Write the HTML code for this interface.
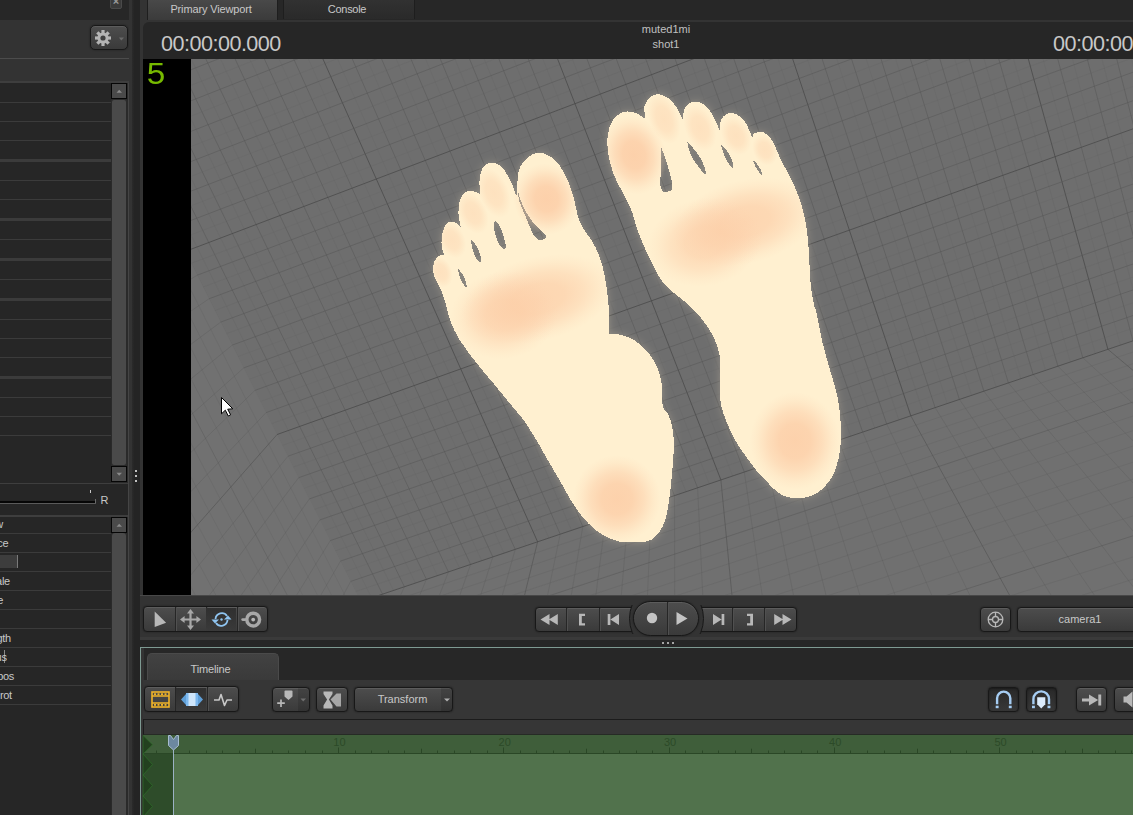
<!DOCTYPE html>
<html><head><meta charset="utf-8"><title>SFM</title>
<style>
*{box-sizing:border-box;margin:0;padding:0}
html,body{width:1133px;height:815px;overflow:hidden;background:#262626}
body{font-family:"Liberation Sans",sans-serif;font-size:11px;color:#c8c8c8;position:relative}
#root{position:absolute;left:0;top:0;width:1133px;height:815px;overflow:hidden;background:#262626}
.a{position:absolute}
.btn{position:absolute;border:1px solid #181818;border-radius:4px;background:linear-gradient(#4d4d4d,#3a3a3a);box-shadow:inset 0 1px 0 #5c5c5c,0 0 1.5px #151515}
.grp{position:absolute;border:1px solid #181818;border-radius:4px;background:linear-gradient(#4d4d4d,#3a3a3a);box-shadow:inset 0 1px 0 #5c5c5c,0 0 1.5px #151515;overflow:hidden}
.dv{position:absolute;top:0;bottom:0;width:2px;background:#262626;border-right:1px solid #505050}
.row{position:absolute;left:0;width:111px;background:#3b3b3b;height:1px}
.lbl{position:absolute;left:0;color:#c8c8c8;font-size:11px;line-height:13px;white-space:nowrap;letter-spacing:-0.35px}
.tab{position:absolute;text-align:center;color:#c8c8c8;font-size:11px;letter-spacing:-0.15px}
svg{display:block}
</style></head><body><div id="root">

<!-- ===== LEFT PANEL ===== -->
<div class="a" style="left:0;top:0;width:129px;height:20px;background:#272727"></div>
<div class="a" style="left:0;top:20px;width:129px;height:38px;background:#333"></div>
<div class="a" style="left:110px;top:-4px;width:12px;height:13px;background:#3a3a3a;border:1px solid #4a4a4a;border-radius:2px"></div>
<div class="a" style="left:110px;top:-5px;width:12px;height:13px;color:#9a9a9a;font-size:11px;font-weight:bold;text-align:center;line-height:13px">×</div>
<div class="btn" style="left:89.5px;top:25px;width:38px;height:25px;border-radius:5px"></div>
<svg class="a" style="left:94px;top:29px" width="30" height="18" viewBox="0 0 30 18">
 <g transform="translate(9,9)" fill="#b4b4b4">
  <g id="teeth"><rect x="-1.6" y="-8" width="3.2" height="16"/><rect x="-1.6" y="-8" width="3.2" height="16" transform="rotate(45)"/><rect x="-1.6" y="-8" width="3.2" height="16" transform="rotate(90)"/><rect x="-1.6" y="-8" width="3.2" height="16" transform="rotate(135)"/></g>
  <circle r="5.6"/><circle r="2.6" fill="#404040"/>
 </g>
 <path d="M24.8,8.6 L30,8.6 L27.4,11.4 Z" fill="#6a6a6a"/>
</svg>
<div class="a" style="left:0;top:58px;width:129px;height:1px;background:#4c4c4c"></div>
<div class="a" style="left:0;top:59px;width:129px;height:22px;background:#333"></div>
<div class="a" style="left:0;top:81px;width:129px;height:2px;background:#3e3e3e"></div>
<!-- upper list -->
<div class="a" style="left:0;top:83px;width:128px;height:400px;background:#2a2a2a"></div>
<div class="a" style="left:0;top:83px;width:111px;height:400px;background:#262626"></div>
<div class="row" style="top:102px;height:1px"></div><div class="row" style="top:121px;height:1px"></div><div class="row" style="top:140px;height:1px"></div><div class="row" style="top:159px;height:3px"></div><div class="row" style="top:180px;height:1px"></div><div class="row" style="top:199px;height:1px"></div><div class="row" style="top:218px;height:3px"></div><div class="row" style="top:239px;height:1px"></div><div class="row" style="top:258px;height:3px"></div><div class="row" style="top:279px;height:1px"></div><div class="row" style="top:298px;height:3px"></div><div class="row" style="top:319px;height:1px"></div><div class="row" style="top:338px;height:1px"></div><div class="row" style="top:357px;height:1px"></div><div class="row" style="top:376px;height:3px"></div><div class="row" style="top:397px;height:1px"></div><div class="row" style="top:416px;height:1px"></div><div class="row" style="top:435px;height:1px"></div>
<!-- scrollbar 1 -->
<div class="a" style="left:112px;top:100px;width:14px;height:365px;background:#4a4a4a;border-radius:2px"></div>
<div class="a" style="left:111px;top:83px;width:16px;height:16px;background:#4a4a4a;border:1px solid #060606"></div>
<svg class="a" style="left:111px;top:83px" width="16" height="16"><path d="M5.5,9.8 L8.2,6.8 L11,9.8 Z" fill="#8a8a8a"/></svg>
<div class="a" style="left:111px;top:466px;width:16px;height:16px;background:#4a4a4a;border:1px solid #060606"></div>
<svg class="a" style="left:111px;top:466px" width="16" height="16"><path d="M5.5,6.8 L8.2,9.8 L11,6.8 Z" fill="#8a8a8a"/></svg>
<!-- slider zone -->
<div class="a" style="left:0;top:483px;width:129px;height:1px;background:#3e3e3e"></div>
<div class="a" style="left:0;top:484px;width:129px;height:31px;background:#262626"></div>
<div class="a" style="left:0;top:500.5px;width:96px;height:3px;background:#060606;border-bottom:1px solid #5a5a5a"></div>
<div class="a" style="left:95px;top:499px;width:1px;height:4px;background:#6a6a6a"></div>
<div class="a" style="left:90px;top:490px;width:1px;height:3px;background:#c8c8c8"></div>
<div class="lbl" style="left:100.5px;top:493.5px;font-size:11px">R</div>
<div class="a" style="left:0;top:515px;width:129px;height:2px;background:#3e3e3e"></div>
<!-- lower list -->
<div class="a" style="left:0;top:517px;width:128px;height:298px;background:#2a2a2a"></div>
<div class="a" style="left:0;top:517px;width:111px;height:298px;background:#262626"></div>
<div class="row" style="top:533px"></div><div class="row" style="top:552px"></div><div class="row" style="top:571px"></div><div class="row" style="top:590px"></div><div class="row" style="top:609px"></div><div class="row" style="top:628px"></div><div class="row" style="top:647px"></div><div class="row" style="top:666px"></div><div class="row" style="top:685px"></div><div class="row" style="top:704px"></div>
<div class="a" style="left:112px;top:533px;width:14px;height:290px;background:#4a4a4a;border-radius:3px 3px 0 0"></div>
<div class="a" style="left:111px;top:517px;width:16px;height:16px;background:#4a4a4a;border:1px solid #060606"></div>
<svg class="a" style="left:111px;top:517px" width="16" height="16"><path d="M5.5,9.8 L8.2,6.8 L11,9.8 Z" fill="#8a8a8a"/></svg>
<div class="a" style="left:0;top:555px;width:18px;height:13px;background:#3d3d3d;border-right:1px solid #7a7a7a"></div>
<div class="a" style="left:4px;top:650px;width:1px;height:13px;background:#8a8a8a"></div>
<div class="lbl" style="top:517.5px;left:-4.7px">w</div>
<div class="lbl" style="top:536.5px;left:-2.7px">ce</div>
<div class="lbl" style="top:574.5px;left:-3.9px">ale</div>
<div class="lbl" style="top:593.5px;left:-2.7px">e</div>
<div class="lbl" style="top:631.5px;left:-3.5px">gth</div>
<div class="lbl" style="top:650.5px;left:-4.4px">us</div>
<div class="lbl" style="top:669.5px;left:-2.8px">pos</div>
<div class="lbl" style="top:688.5px;left:0px">rot</div>

<div class="a" style="left:128px;top:83px;width:1px;height:732px;background:#454545"></div>
<!-- ===== SPLITTER ===== -->
<div class="a" style="left:129px;top:0;width:3px;height:815px;background:#333"></div>
<div class="a" style="left:132px;top:0;width:8px;height:815px;background:linear-gradient(90deg,#2b2b2b,#242424 30%,#242424)"></div>
<div class="a" style="left:140px;top:0;width:3px;height:815px;background:#333"></div>
<div class="a" style="left:135px;top:470px;width:2px;height:2px;background:#c0c0c0"></div>
<div class="a" style="left:135px;top:475px;width:2px;height:2px;background:#c0c0c0"></div>
<div class="a" style="left:135px;top:480px;width:2px;height:2px;background:#c0c0c0"></div>

<!-- ===== TOP TABS ===== -->
<div class="a" style="left:143px;top:0;width:990px;height:20px;background:#272727"></div>
<div class="a" style="left:143px;top:0;width:4px;height:20px;background:#333"></div>
<div class="tab" style="left:147px;top:-3px;width:131px;height:23px;line-height:22px;background:linear-gradient(#4a4a4a,#3b3b3b);border:1px solid #1e1e1e;border-bottom:none;border-radius:3px 3px 0 0;padding-right:3px">Primary Viewport</div>
<div class="tab" style="left:283px;top:-3px;width:132px;height:22px;line-height:22px;background:linear-gradient(#323232,#2a2a2a);border:1px solid #1e1e1e;border-bottom:none;border-radius:3px 3px 0 0;padding-right:4px;letter-spacing:-0.3px">Console</div>
<div class="a" style="left:143px;top:20px;width:990px;height:2px;background:#333"></div>
<div class="a" style="left:143px;top:22px;width:10px;height:10px;background:#333"></div>
<div class="a" style="left:143px;top:22px;width:990px;height:37px;background:#262626;border-radius:6px 0 0 0"></div>
<div class="a" id="tc1" style="left:161px;top:32px;font-size:21.6px;line-height:24px;letter-spacing:-0.52px;color:#c8c8c8;white-space:nowrap">00:00:00.000</div>
<div class="a" id="tc2" style="left:1053px;top:32px;font-size:21.6px;line-height:24px;letter-spacing:-0.52px;color:#c8c8c8;white-space:nowrap">00:00:00.000</div>
<div class="a" style="left:566px;top:22px;width:200px;text-align:center;font-size:11px;line-height:15px;color:#c0c0c0">muted1mi<br>shot1</div>

<!-- ===== VIEWPORT ===== -->
<div class="a" style="left:143px;top:59px;width:48px;height:536px;background:#000"></div>
<div class="a" id="fps" style="left:146px;top:59px;font-family:'Liberation Mono','DejaVu Sans Mono',monospace;font-size:32px;line-height:34px;color:#76b900;transform-origin:0 0;transform:scaleX(1.04)">5</div>
<svg id="vp" width="1133" height="815" viewBox="0 0 1133 815" style="position:absolute;left:0;top:0">
<defs>
 <clipPath id="vpc"><rect x="191" y="59" width="942" height="536"/></clipPath>
 <clipPath id="cl"><path d="M450.7,321.6C448.1,314.8 446.4,305.2 444.5,299.5C442.7,293.8 441.3,290.9 439.6,287.2C438.0,283.6 435.8,280.9 434.7,277.4C433.6,273.9 432.7,269.7 433.0,266.4C433.3,263.1 435.0,259.8 436.7,257.8C438.4,255.8 442.0,254.9 443.3,254.6C444.6,254.3 444.5,255.8 444.5,255.8C444.5,255.8 441.9,249.5 441.6,245.5C441.3,241.6 441.7,235.7 442.6,232.0C443.5,228.3 445.2,225.2 447.0,223.4C448.8,221.7 451.1,221.4 453.1,221.7C455.2,222.0 458.0,224.5 459.3,225.4C460.5,226.3 460.7,226.9 460.7,226.9C460.7,226.9 458.7,218.1 458.5,213.6C458.4,209.2 458.6,203.7 459.8,200.1C460.9,196.6 463.2,193.8 465.4,192.3C467.6,190.8 470.5,190.8 472.8,191.0C475.0,191.2 477.7,192.9 478.9,193.5C480.1,194.1 479.9,194.5 479.9,194.5C479.9,194.5 479.2,183.6 479.6,179.3C480.1,174.9 481.1,170.9 482.6,168.2C484.1,165.6 486.3,164.0 488.7,163.3C491.2,162.6 494.6,162.6 497.3,163.8C500.0,165.0 502.2,167.3 504.7,170.7C507.1,174.1 510.1,180.1 512.0,184.2C513.9,188.3 515.3,194.2 516.2,195.2C517.1,196.2 517.4,190.3 517.4,190.3C517.4,190.3 517.2,177.8 518.2,173.1C519.1,168.4 520.6,165.2 523.1,162.1C525.5,158.9 529.4,155.7 532.9,154.2C536.4,152.8 540.2,152.5 543.9,153.5C547.6,154.5 551.7,157.1 555.0,160.1C558.2,163.2 561.0,167.5 563.6,171.9C566.1,176.3 568.3,181.7 570.2,186.6C572.0,191.5 573.3,196.4 574.6,201.3C575.9,206.3 576.4,211.6 577.8,216.1C579.2,220.6 580.9,224.3 583.2,228.3C585.5,232.4 589.1,236.1 591.8,240.6C594.4,245.1 597.1,250.0 599.1,255.3C601.2,260.7 602.7,266.4 604.0,272.5C605.4,278.7 606.4,285.6 607.2,292.1C608.1,298.7 608.6,304.8 609.0,311.8C609.3,318.7 609.4,333.9 609.4,333.9C609.4,333.9 609.0,334.1 609.0,334.1C609.0,334.1 615.9,333.6 620.2,334.7C624.5,335.8 630.3,337.7 634.9,340.6C639.6,343.6 644.5,348.0 648.2,352.4C651.9,356.8 654.8,362.2 657.0,367.1C659.2,372.0 660.6,376.9 661.4,381.8C662.3,386.7 661.8,392.4 662.0,396.6C662.3,400.7 661.8,403.7 662.9,406.9C664.0,410.0 667.2,412.0 668.8,415.7C670.4,419.4 671.8,423.8 672.6,428.9C673.5,434.1 673.8,440.2 673.8,446.6C673.8,453.0 673.2,459.9 672.6,467.2C672.0,474.6 671.2,483.4 670.3,490.8C669.4,498.1 668.6,505.5 667.3,511.4C666.1,517.3 664.9,521.9 662.9,526.1C660.9,530.3 658.2,533.9 655.6,536.4C652.9,539.0 650.7,540.5 646.7,541.4C642.8,542.4 636.4,542.1 631.8,542.1C627.2,542.1 623.5,542.3 619.4,541.5C615.3,540.7 611.2,539.2 607.1,537.2C603.0,535.2 598.8,532.6 594.7,529.2C590.6,525.8 586.5,521.8 582.4,516.8C578.3,511.7 573.7,504.9 570.0,498.9C566.3,492.9 563.7,487.2 560.0,480.8C556.3,474.4 551.9,467.3 548.0,460.5C544.1,453.7 539.3,445.0 536.4,440.0C533.5,435.0 532.7,434.0 530.4,430.4C528.1,426.8 526.0,423.2 522.5,418.6C519.0,414.0 514.2,408.7 509.5,403.0C504.8,397.3 500.0,391.3 494.4,384.5C488.8,377.7 481.6,369.6 475.8,362.2C470.0,354.8 464.0,346.8 459.8,340.0C455.6,333.2 453.2,328.3 450.7,321.6Z"/></clipPath>
 <clipPath id="cr"><path d="M663.6,283.2C656.7,274.9 653.1,265.0 648.9,256.7C644.7,248.3 641.5,241.0 638.6,233.1C635.6,225.3 633.9,216.4 631.2,209.6C628.5,202.7 625.3,197.8 622.4,191.9C619.4,186.0 615.9,180.6 613.6,174.2C611.2,167.8 609.2,160.0 608.3,153.6C607.3,147.2 607.0,141.3 607.7,135.9C608.3,130.5 609.6,125.1 612.1,121.2C614.5,117.3 618.7,113.9 622.4,112.4C626.1,110.9 630.5,111.4 634.2,112.4C637.8,113.4 642.6,117.4 644.5,118.3C646.3,119.1 645.4,117.4 645.4,117.4C645.4,117.4 643.6,109.9 644.5,106.5C645.3,103.1 647.9,99.1 650.4,97.1C652.8,95.0 656.0,93.8 659.2,94.1C662.4,94.5 666.6,96.8 669.5,99.1C672.4,101.4 674.7,104.5 676.9,108.0C679.1,111.4 681.7,117.9 682.7,119.7C683.8,121.6 683.3,118.9 683.3,118.9C683.3,118.9 683.1,112.1 684.2,109.4C685.3,106.8 687.7,104.2 690.1,103.0C692.6,101.7 696.0,101.2 698.9,102.1C701.9,102.9 705.1,105.0 707.8,108.0C710.5,110.9 713.2,116.1 715.1,119.7C717.1,123.4 718.7,128.5 719.6,130.1C720.4,131.6 720.1,129.2 720.1,129.2C720.1,129.2 719.9,122.3 721.0,119.7C722.2,117.2 724.5,114.8 726.9,113.9C729.4,112.9 732.8,112.6 735.7,113.9C738.7,115.1 742.1,118.0 744.6,121.2C747.0,124.4 749.2,130.3 750.5,133.0C751.7,135.7 751.5,137.1 751.9,137.7C752.3,138.3 752.8,136.5 752.8,136.5C752.8,136.5 753.1,133.7 754.9,133.0C756.7,132.3 761.0,131.4 763.7,132.4C766.4,133.4 768.9,135.8 771.1,138.9C773.3,141.9 775.3,147.0 777.0,150.7C778.7,154.3 779.2,156.6 781.4,161.0C783.6,165.4 787.3,171.0 790.2,177.2C793.2,183.3 796.6,190.9 799.1,197.8C801.5,204.6 803.5,211.5 804.9,218.4C806.4,225.3 807.1,231.6 807.9,239.0C808.6,246.4 808.9,254.7 809.4,262.6C809.8,270.4 810.1,279.2 810.8,286.1C811.6,293.0 812.8,299.2 813.8,303.8C814.7,308.3 815.2,307.0 816.7,313.6C818.1,320.1 820.3,333.7 822.6,343.0C824.8,352.3 827.5,360.7 829.9,369.5C832.4,378.3 835.6,388.1 837.3,396.0C839.0,403.8 839.6,409.7 840.2,416.6C840.9,423.5 841.3,430.3 841.1,437.2C840.9,444.1 840.1,451.5 838.7,457.8C837.4,464.2 835.6,470.3 832.9,475.5C830.2,480.6 826.2,485.3 822.6,488.7C818.9,492.2 814.7,494.5 810.8,496.1C806.8,497.7 802.9,498.0 799.0,498.2C795.1,498.3 790.9,498.1 787.2,497.0C783.5,495.9 780.3,494.3 776.9,491.7C773.5,489.1 770.0,484.9 766.6,481.4C763.2,477.8 759.7,474.4 756.3,470.3C752.9,466.2 749.4,461.4 746.0,456.6C742.6,451.7 738.9,446.9 735.7,441.2C732.5,435.5 729.3,428.6 726.9,422.5C724.4,416.4 722.1,410.7 721.0,404.8C719.8,398.9 720.2,393.1 720.1,387.2C720.0,381.3 720.5,374.9 720.4,369.5C720.3,364.1 720.6,360.2 719.5,354.8C718.4,349.4 716.3,342.8 713.6,337.1C710.9,331.5 707.2,326.1 703.3,320.9C699.4,315.8 696.7,312.5 690.1,306.2C683.4,299.9 670.5,291.4 663.6,283.2Z"/></clipPath>
 <filter id="glow" x="-20%" y="-20%" width="140%" height="140%"><feGaussianBlur stdDeviation="2.2"/></filter>
 <filter id="glow2" x="-20%" y="-20%" width="140%" height="140%"><feGaussianBlur stdDeviation="5"/></filter>
 <radialGradient id="bg"><stop offset="0" stop-color="#fccba4" stop-opacity="0.9"/><stop offset="0.35" stop-color="#fccba4" stop-opacity="0.82"/><stop offset="0.6" stop-color="#fccca6" stop-opacity="0.55"/><stop offset="0.82" stop-color="#fccda8" stop-opacity="0.2"/><stop offset="1" stop-color="#fdd3b0" stop-opacity="0"/></radialGradient><radialGradient id="bt"><stop offset="0" stop-color="#fcd0aa" stop-opacity="0.46"/><stop offset="0.5" stop-color="#fcd0aa" stop-opacity="0.38"/><stop offset="0.8" stop-color="#fcd0aa" stop-opacity="0.15"/><stop offset="1" stop-color="#fdd3b0" stop-opacity="0"/></radialGradient>
 <filter id="b6" x="-50%" y="-50%" width="200%" height="200%"><feGaussianBlur stdDeviation="7"/></filter>
</defs>
<g clip-path="url(#vpc)">
 <rect x="191" y="59" width="942" height="536" fill="#6e6e6e"/>
 <polygon points="-153.1,-423.7 1605.0,-1238.5 1745.6,134.1 360.8,601.5" fill="#6e6e6e"/><polygon points="-153.1,-423.7 360.8,601.5 34.1,1245.7 -1734.7,-1205.2" fill="#717171"/><polygon points="360.8,601.5 1745.6,134.1 3235.0,341.6 34.1,1245.7" fill="#707070"/><g fill="none"><line x1="-139.9" y1="-429.8" x2="371.6" y2="597.8" stroke="#606060" stroke-width="0.80" opacity="0.25"/><line x1="-126.5" y1="-436.0" x2="382.5" y2="594.1" stroke="#555555" stroke-width="0.95" opacity="0.52"/><line x1="-113.2" y1="-442.2" x2="393.5" y2="590.4" stroke="#606060" stroke-width="0.80" opacity="0.25"/><line x1="-99.8" y1="-448.4" x2="404.4" y2="586.7" stroke="#555555" stroke-width="0.95" opacity="0.52"/><line x1="-86.4" y1="-454.6" x2="415.4" y2="583.0" stroke="#606060" stroke-width="0.80" opacity="0.25"/><line x1="-73.0" y1="-460.8" x2="426.4" y2="579.3" stroke="#555555" stroke-width="0.95" opacity="0.52"/><line x1="-59.5" y1="-467.1" x2="437.4" y2="575.6" stroke="#606060" stroke-width="0.80" opacity="0.25"/><line x1="-45.9" y1="-473.4" x2="448.4" y2="571.9" stroke="#555555" stroke-width="0.95" opacity="0.52"/><line x1="-32.4" y1="-479.7" x2="459.5" y2="568.1" stroke="#606060" stroke-width="0.80" opacity="0.25"/><line x1="-18.8" y1="-486.0" x2="470.6" y2="564.4" stroke="#555555" stroke-width="0.95" opacity="0.52"/><line x1="-5.1" y1="-492.3" x2="481.7" y2="560.6" stroke="#606060" stroke-width="0.80" opacity="0.25"/><line x1="8.6" y1="-498.6" x2="492.8" y2="556.9" stroke="#555555" stroke-width="0.95" opacity="0.52"/><line x1="22.3" y1="-505.0" x2="504.0" y2="553.1" stroke="#606060" stroke-width="0.80" opacity="0.25"/><line x1="36.1" y1="-511.4" x2="515.2" y2="549.3" stroke="#555555" stroke-width="0.95" opacity="0.52"/><line x1="49.9" y1="-517.8" x2="526.4" y2="545.5" stroke="#606060" stroke-width="0.80" opacity="0.25"/><line x1="63.7" y1="-524.2" x2="537.6" y2="541.8" stroke="#464646" stroke-width="1.00" opacity="0.72"/><line x1="77.6" y1="-530.6" x2="548.9" y2="538.0" stroke="#606060" stroke-width="0.80" opacity="0.25"/><line x1="91.5" y1="-537.1" x2="560.2" y2="534.1" stroke="#555555" stroke-width="0.95" opacity="0.52"/><line x1="105.5" y1="-543.5" x2="571.5" y2="530.3" stroke="#606060" stroke-width="0.80" opacity="0.25"/><line x1="119.5" y1="-550.0" x2="582.8" y2="526.5" stroke="#555555" stroke-width="0.95" opacity="0.52"/><line x1="133.5" y1="-556.5" x2="594.2" y2="522.7" stroke="#606060" stroke-width="0.80" opacity="0.25"/><line x1="147.6" y1="-563.1" x2="605.6" y2="518.8" stroke="#555555" stroke-width="0.95" opacity="0.52"/><line x1="161.7" y1="-569.6" x2="617.0" y2="515.0" stroke="#606060" stroke-width="0.80" opacity="0.25"/><line x1="175.9" y1="-576.2" x2="628.5" y2="511.1" stroke="#555555" stroke-width="0.95" opacity="0.52"/><line x1="190.1" y1="-582.7" x2="639.9" y2="507.2" stroke="#606060" stroke-width="0.80" opacity="0.25"/><line x1="204.3" y1="-589.3" x2="651.4" y2="503.4" stroke="#555555" stroke-width="0.95" opacity="0.52"/><line x1="218.6" y1="-596.0" x2="662.9" y2="499.5" stroke="#606060" stroke-width="0.80" opacity="0.25"/><line x1="232.9" y1="-602.6" x2="674.5" y2="495.6" stroke="#555555" stroke-width="0.95" opacity="0.52"/><line x1="247.3" y1="-609.3" x2="686.0" y2="491.7" stroke="#606060" stroke-width="0.80" opacity="0.25"/><line x1="261.7" y1="-615.9" x2="697.6" y2="487.8" stroke="#555555" stroke-width="0.95" opacity="0.52"/><line x1="276.1" y1="-622.6" x2="709.2" y2="483.8" stroke="#606060" stroke-width="0.80" opacity="0.25"/><line x1="290.6" y1="-629.4" x2="720.9" y2="479.9" stroke="#464646" stroke-width="1.00" opacity="0.72"/><line x1="305.2" y1="-636.1" x2="732.6" y2="476.0" stroke="#606060" stroke-width="0.80" opacity="0.25"/><line x1="319.7" y1="-642.9" x2="744.3" y2="472.0" stroke="#555555" stroke-width="0.95" opacity="0.52"/><line x1="334.4" y1="-649.6" x2="756.0" y2="468.1" stroke="#606060" stroke-width="0.80" opacity="0.25"/><line x1="349.0" y1="-656.4" x2="767.7" y2="464.1" stroke="#555555" stroke-width="0.95" opacity="0.52"/><line x1="363.7" y1="-663.2" x2="779.5" y2="460.1" stroke="#606060" stroke-width="0.80" opacity="0.25"/><line x1="378.5" y1="-670.1" x2="791.3" y2="456.1" stroke="#555555" stroke-width="0.95" opacity="0.52"/><line x1="393.3" y1="-676.9" x2="803.1" y2="452.2" stroke="#606060" stroke-width="0.80" opacity="0.25"/><line x1="408.1" y1="-683.8" x2="815.0" y2="448.2" stroke="#555555" stroke-width="0.95" opacity="0.52"/><line x1="423.0" y1="-690.7" x2="826.9" y2="444.1" stroke="#606060" stroke-width="0.80" opacity="0.25"/><line x1="437.9" y1="-697.6" x2="838.8" y2="440.1" stroke="#555555" stroke-width="0.95" opacity="0.52"/><line x1="452.9" y1="-704.6" x2="850.7" y2="436.1" stroke="#606060" stroke-width="0.80" opacity="0.25"/><line x1="467.9" y1="-711.5" x2="862.7" y2="432.1" stroke="#555555" stroke-width="0.95" opacity="0.52"/><line x1="483.0" y1="-718.5" x2="874.7" y2="428.0" stroke="#606060" stroke-width="0.80" opacity="0.25"/><line x1="498.1" y1="-725.5" x2="886.7" y2="424.0" stroke="#555555" stroke-width="0.95" opacity="0.52"/><line x1="513.2" y1="-732.5" x2="898.8" y2="419.9" stroke="#606060" stroke-width="0.80" opacity="0.25"/><line x1="528.4" y1="-739.6" x2="910.8" y2="415.8" stroke="#464646" stroke-width="1.00" opacity="0.72"/><line x1="543.6" y1="-746.6" x2="922.9" y2="411.7" stroke="#606060" stroke-width="0.80" opacity="0.25"/><line x1="558.9" y1="-753.7" x2="935.1" y2="407.6" stroke="#555555" stroke-width="0.95" opacity="0.52"/><line x1="574.3" y1="-760.8" x2="947.2" y2="403.5" stroke="#606060" stroke-width="0.80" opacity="0.25"/><line x1="589.6" y1="-767.9" x2="959.4" y2="399.4" stroke="#555555" stroke-width="0.95" opacity="0.52"/><line x1="605.1" y1="-775.1" x2="971.6" y2="395.3" stroke="#606060" stroke-width="0.80" opacity="0.25"/><line x1="620.5" y1="-782.3" x2="983.9" y2="391.2" stroke="#555555" stroke-width="0.95" opacity="0.52"/><line x1="636.0" y1="-789.4" x2="996.1" y2="387.0" stroke="#606060" stroke-width="0.80" opacity="0.25"/><line x1="651.6" y1="-796.7" x2="1008.4" y2="382.9" stroke="#555555" stroke-width="0.95" opacity="0.52"/><line x1="667.2" y1="-803.9" x2="1020.8" y2="378.7" stroke="#606060" stroke-width="0.80" opacity="0.25"/><line x1="682.9" y1="-811.1" x2="1033.1" y2="374.5" stroke="#555555" stroke-width="0.95" opacity="0.52"/><line x1="698.6" y1="-818.4" x2="1045.5" y2="370.4" stroke="#606060" stroke-width="0.80" opacity="0.25"/><line x1="714.3" y1="-825.7" x2="1057.9" y2="366.2" stroke="#555555" stroke-width="0.95" opacity="0.52"/><line x1="730.1" y1="-833.0" x2="1070.4" y2="362.0" stroke="#606060" stroke-width="0.80" opacity="0.25"/><line x1="746.0" y1="-840.4" x2="1082.8" y2="357.8" stroke="#555555" stroke-width="0.95" opacity="0.52"/><line x1="761.9" y1="-847.8" x2="1095.3" y2="353.5" stroke="#606060" stroke-width="0.80" opacity="0.25"/><line x1="777.8" y1="-855.2" x2="1107.9" y2="349.3" stroke="#464646" stroke-width="1.00" opacity="0.72"/><line x1="793.8" y1="-862.6" x2="1120.4" y2="345.1" stroke="#606060" stroke-width="0.80" opacity="0.25"/><line x1="809.8" y1="-870.0" x2="1133.0" y2="340.8" stroke="#555555" stroke-width="0.95" opacity="0.52"/><line x1="825.9" y1="-877.5" x2="1145.6" y2="336.6" stroke="#606060" stroke-width="0.80" opacity="0.25"/><line x1="842.1" y1="-884.9" x2="1158.3" y2="332.3" stroke="#555555" stroke-width="0.95" opacity="0.52"/><line x1="858.3" y1="-892.4" x2="1170.9" y2="328.0" stroke="#606060" stroke-width="0.80" opacity="0.25"/><line x1="874.5" y1="-900.0" x2="1183.6" y2="323.7" stroke="#555555" stroke-width="0.95" opacity="0.52"/><line x1="890.8" y1="-907.5" x2="1196.4" y2="319.4" stroke="#606060" stroke-width="0.80" opacity="0.25"/><line x1="907.1" y1="-915.1" x2="1209.1" y2="315.1" stroke="#555555" stroke-width="0.95" opacity="0.52"/><line x1="923.5" y1="-922.7" x2="1221.9" y2="310.8" stroke="#606060" stroke-width="0.80" opacity="0.25"/><line x1="940.0" y1="-930.3" x2="1234.8" y2="306.5" stroke="#555555" stroke-width="0.95" opacity="0.52"/><line x1="956.5" y1="-938.0" x2="1247.6" y2="302.2" stroke="#606060" stroke-width="0.80" opacity="0.25"/><line x1="973.0" y1="-945.6" x2="1260.5" y2="297.8" stroke="#555555" stroke-width="0.95" opacity="0.52"/><line x1="989.6" y1="-953.3" x2="1273.4" y2="293.4" stroke="#606060" stroke-width="0.80" opacity="0.25"/><line x1="1006.3" y1="-961.0" x2="1286.4" y2="289.1" stroke="#555555" stroke-width="0.95" opacity="0.52"/><line x1="1023.0" y1="-968.8" x2="1299.3" y2="284.7" stroke="#606060" stroke-width="0.80" opacity="0.25"/><line x1="1039.7" y1="-976.5" x2="1312.3" y2="280.3" stroke="#464646" stroke-width="1.00" opacity="0.72"/><line x1="1056.5" y1="-984.3" x2="1325.4" y2="275.9" stroke="#606060" stroke-width="0.80" opacity="0.25"/><line x1="1073.4" y1="-992.1" x2="1338.5" y2="271.5" stroke="#555555" stroke-width="0.95" opacity="0.52"/><line x1="1090.3" y1="-1000.0" x2="1351.6" y2="267.1" stroke="#606060" stroke-width="0.80" opacity="0.25"/><line x1="1107.3" y1="-1007.8" x2="1364.7" y2="262.6" stroke="#555555" stroke-width="0.95" opacity="0.52"/><line x1="1124.3" y1="-1015.7" x2="1377.9" y2="258.2" stroke="#606060" stroke-width="0.80" opacity="0.25"/><line x1="1141.4" y1="-1023.6" x2="1391.1" y2="253.7" stroke="#555555" stroke-width="0.95" opacity="0.52"/><line x1="1158.5" y1="-1031.6" x2="1404.3" y2="249.3" stroke="#606060" stroke-width="0.80" opacity="0.25"/><line x1="1175.7" y1="-1039.5" x2="1417.5" y2="244.8" stroke="#555555" stroke-width="0.95" opacity="0.52"/><line x1="1192.9" y1="-1047.5" x2="1430.8" y2="240.3" stroke="#606060" stroke-width="0.80" opacity="0.25"/><line x1="1210.2" y1="-1055.5" x2="1444.2" y2="235.8" stroke="#555555" stroke-width="0.95" opacity="0.52"/><line x1="1227.5" y1="-1063.6" x2="1457.5" y2="231.3" stroke="#606060" stroke-width="0.80" opacity="0.25"/><line x1="1244.9" y1="-1071.7" x2="1470.9" y2="226.8" stroke="#555555" stroke-width="0.95" opacity="0.52"/><line x1="1262.4" y1="-1079.7" x2="1484.3" y2="222.3" stroke="#606060" stroke-width="0.80" opacity="0.25"/><line x1="1279.9" y1="-1087.9" x2="1497.8" y2="217.7" stroke="#555555" stroke-width="0.95" opacity="0.52"/><line x1="1297.5" y1="-1096.0" x2="1511.2" y2="213.2" stroke="#606060" stroke-width="0.80" opacity="0.25"/><line x1="1315.1" y1="-1104.2" x2="1524.8" y2="208.6" stroke="#464646" stroke-width="1.00" opacity="0.72"/><line x1="1332.8" y1="-1112.4" x2="1538.3" y2="204.0" stroke="#606060" stroke-width="0.80" opacity="0.25"/><line x1="1350.5" y1="-1120.6" x2="1551.9" y2="199.5" stroke="#555555" stroke-width="0.95" opacity="0.52"/><line x1="1368.3" y1="-1128.8" x2="1565.5" y2="194.9" stroke="#606060" stroke-width="0.80" opacity="0.25"/><line x1="1386.2" y1="-1137.1" x2="1579.2" y2="190.3" stroke="#555555" stroke-width="0.95" opacity="0.52"/><line x1="1404.1" y1="-1145.4" x2="1592.8" y2="185.6" stroke="#606060" stroke-width="0.80" opacity="0.25"/><line x1="1422.1" y1="-1153.7" x2="1606.5" y2="181.0" stroke="#555555" stroke-width="0.95" opacity="0.52"/><line x1="1440.1" y1="-1162.1" x2="1620.3" y2="176.4" stroke="#606060" stroke-width="0.80" opacity="0.25"/><line x1="1458.2" y1="-1170.5" x2="1634.1" y2="171.7" stroke="#555555" stroke-width="0.95" opacity="0.52"/><line x1="1476.3" y1="-1178.9" x2="1647.9" y2="167.1" stroke="#606060" stroke-width="0.80" opacity="0.25"/><line x1="1494.5" y1="-1187.3" x2="1661.7" y2="162.4" stroke="#555555" stroke-width="0.95" opacity="0.52"/><line x1="1512.8" y1="-1195.8" x2="1675.6" y2="157.7" stroke="#606060" stroke-width="0.80" opacity="0.25"/><line x1="1531.1" y1="-1204.3" x2="1689.5" y2="153.0" stroke="#555555" stroke-width="0.95" opacity="0.52"/><line x1="1549.5" y1="-1212.8" x2="1703.5" y2="148.3" stroke="#606060" stroke-width="0.80" opacity="0.25"/><line x1="1568.0" y1="-1221.4" x2="1717.5" y2="143.6" stroke="#555555" stroke-width="0.95" opacity="0.52"/><line x1="1586.5" y1="-1229.9" x2="1731.5" y2="138.8" stroke="#606060" stroke-width="0.80" opacity="0.25"/><line x1="1605.0" y1="-1238.5" x2="1745.6" y2="134.1" stroke="#464646" stroke-width="1.00" opacity="0.72"/><line x1="-153.1" y1="-423.7" x2="1605.0" y2="-1238.5" stroke="#464646" stroke-width="1.00" opacity="0.72"/><line x1="-144.9" y1="-407.3" x2="1607.4" y2="-1215.7" stroke="#606060" stroke-width="0.80" opacity="0.25"/><line x1="-136.7" y1="-391.0" x2="1609.7" y2="-1193.0" stroke="#555555" stroke-width="0.95" opacity="0.52"/><line x1="-128.6" y1="-374.8" x2="1612.0" y2="-1170.5" stroke="#606060" stroke-width="0.80" opacity="0.25"/><line x1="-120.6" y1="-358.7" x2="1614.3" y2="-1148.2" stroke="#555555" stroke-width="0.95" opacity="0.52"/><line x1="-112.6" y1="-342.8" x2="1616.5" y2="-1126.1" stroke="#606060" stroke-width="0.80" opacity="0.25"/><line x1="-104.6" y1="-326.9" x2="1618.8" y2="-1104.2" stroke="#555555" stroke-width="0.95" opacity="0.52"/><line x1="-96.7" y1="-311.2" x2="1621.0" y2="-1082.4" stroke="#606060" stroke-width="0.80" opacity="0.25"/><line x1="-88.9" y1="-295.6" x2="1623.2" y2="-1060.9" stroke="#555555" stroke-width="0.95" opacity="0.52"/><line x1="-81.1" y1="-280.1" x2="1625.4" y2="-1039.5" stroke="#606060" stroke-width="0.80" opacity="0.25"/><line x1="-73.4" y1="-264.6" x2="1627.6" y2="-1018.2" stroke="#555555" stroke-width="0.95" opacity="0.52"/><line x1="-65.7" y1="-249.3" x2="1629.7" y2="-997.2" stroke="#606060" stroke-width="0.80" opacity="0.25"/><line x1="-58.1" y1="-234.1" x2="1631.9" y2="-976.3" stroke="#555555" stroke-width="0.95" opacity="0.52"/><line x1="-50.5" y1="-219.0" x2="1634.0" y2="-955.6" stroke="#606060" stroke-width="0.80" opacity="0.25"/><line x1="-43.0" y1="-204.1" x2="1636.1" y2="-935.1" stroke="#555555" stroke-width="0.95" opacity="0.52"/><line x1="-35.6" y1="-189.2" x2="1638.2" y2="-914.7" stroke="#606060" stroke-width="0.80" opacity="0.25"/><line x1="-28.1" y1="-174.4" x2="1640.3" y2="-894.4" stroke="#464646" stroke-width="1.00" opacity="0.72"/><line x1="-20.8" y1="-159.7" x2="1642.3" y2="-874.4" stroke="#606060" stroke-width="0.80" opacity="0.25"/><line x1="-13.5" y1="-145.1" x2="1644.3" y2="-854.5" stroke="#555555" stroke-width="0.95" opacity="0.52"/><line x1="-6.2" y1="-130.6" x2="1646.4" y2="-834.7" stroke="#606060" stroke-width="0.80" opacity="0.25"/><line x1="1.0" y1="-116.2" x2="1648.4" y2="-815.1" stroke="#555555" stroke-width="0.95" opacity="0.52"/><line x1="8.2" y1="-101.9" x2="1650.4" y2="-795.7" stroke="#606060" stroke-width="0.80" opacity="0.25"/><line x1="15.3" y1="-87.7" x2="1652.3" y2="-776.4" stroke="#555555" stroke-width="0.95" opacity="0.52"/><line x1="22.4" y1="-73.6" x2="1654.3" y2="-757.2" stroke="#606060" stroke-width="0.80" opacity="0.25"/><line x1="29.4" y1="-59.5" x2="1656.2" y2="-738.2" stroke="#555555" stroke-width="0.95" opacity="0.52"/><line x1="36.4" y1="-45.6" x2="1658.2" y2="-719.4" stroke="#606060" stroke-width="0.80" opacity="0.25"/><line x1="43.3" y1="-31.8" x2="1660.1" y2="-700.7" stroke="#555555" stroke-width="0.95" opacity="0.52"/><line x1="50.2" y1="-18.0" x2="1662.0" y2="-682.1" stroke="#606060" stroke-width="0.80" opacity="0.25"/><line x1="57.1" y1="-4.4" x2="1663.9" y2="-663.7" stroke="#555555" stroke-width="0.95" opacity="0.52"/><line x1="63.9" y1="9.2" x2="1665.8" y2="-645.4" stroke="#606060" stroke-width="0.80" opacity="0.25"/><line x1="70.6" y1="22.7" x2="1667.6" y2="-627.2" stroke="#555555" stroke-width="0.95" opacity="0.52"/><line x1="77.4" y1="36.1" x2="1669.5" y2="-609.2" stroke="#606060" stroke-width="0.80" opacity="0.25"/><line x1="84.0" y1="49.4" x2="1671.3" y2="-591.3" stroke="#464646" stroke-width="1.00" opacity="0.72"/><line x1="90.7" y1="62.6" x2="1673.1" y2="-573.6" stroke="#606060" stroke-width="0.80" opacity="0.25"/><line x1="97.2" y1="75.8" x2="1674.9" y2="-556.0" stroke="#555555" stroke-width="0.95" opacity="0.52"/><line x1="103.8" y1="88.8" x2="1676.7" y2="-538.5" stroke="#606060" stroke-width="0.80" opacity="0.25"/><line x1="110.3" y1="101.8" x2="1678.5" y2="-521.1" stroke="#555555" stroke-width="0.95" opacity="0.52"/><line x1="116.8" y1="114.7" x2="1680.2" y2="-503.9" stroke="#606060" stroke-width="0.80" opacity="0.25"/><line x1="123.2" y1="127.5" x2="1682.0" y2="-486.8" stroke="#555555" stroke-width="0.95" opacity="0.52"/><line x1="129.6" y1="140.2" x2="1683.7" y2="-469.8" stroke="#606060" stroke-width="0.80" opacity="0.25"/><line x1="135.9" y1="152.9" x2="1685.5" y2="-453.0" stroke="#555555" stroke-width="0.95" opacity="0.52"/><line x1="142.2" y1="165.5" x2="1687.2" y2="-436.2" stroke="#606060" stroke-width="0.80" opacity="0.25"/><line x1="148.5" y1="178.0" x2="1688.9" y2="-419.6" stroke="#555555" stroke-width="0.95" opacity="0.52"/><line x1="154.7" y1="190.4" x2="1690.6" y2="-403.1" stroke="#606060" stroke-width="0.80" opacity="0.25"/><line x1="160.9" y1="202.7" x2="1692.2" y2="-386.7" stroke="#555555" stroke-width="0.95" opacity="0.52"/><line x1="167.0" y1="215.0" x2="1693.9" y2="-370.4" stroke="#606060" stroke-width="0.80" opacity="0.25"/><line x1="173.2" y1="227.2" x2="1695.6" y2="-354.3" stroke="#555555" stroke-width="0.95" opacity="0.52"/><line x1="179.2" y1="239.3" x2="1697.2" y2="-338.3" stroke="#606060" stroke-width="0.80" opacity="0.25"/><line x1="185.3" y1="251.4" x2="1698.8" y2="-322.3" stroke="#464646" stroke-width="1.00" opacity="0.72"/><line x1="191.3" y1="263.3" x2="1700.4" y2="-306.5" stroke="#606060" stroke-width="0.80" opacity="0.25"/><line x1="197.2" y1="275.2" x2="1702.1" y2="-290.8" stroke="#555555" stroke-width="0.95" opacity="0.52"/><line x1="203.2" y1="287.0" x2="1703.6" y2="-275.2" stroke="#606060" stroke-width="0.80" opacity="0.25"/><line x1="209.0" y1="298.8" x2="1705.2" y2="-259.7" stroke="#555555" stroke-width="0.95" opacity="0.52"/><line x1="214.9" y1="310.5" x2="1706.8" y2="-244.4" stroke="#606060" stroke-width="0.80" opacity="0.25"/><line x1="220.7" y1="322.1" x2="1708.4" y2="-229.1" stroke="#555555" stroke-width="0.95" opacity="0.52"/><line x1="226.5" y1="333.6" x2="1709.9" y2="-213.9" stroke="#606060" stroke-width="0.80" opacity="0.25"/><line x1="232.3" y1="345.1" x2="1711.5" y2="-198.9" stroke="#555555" stroke-width="0.95" opacity="0.52"/><line x1="238.0" y1="356.5" x2="1713.0" y2="-183.9" stroke="#606060" stroke-width="0.80" opacity="0.25"/><line x1="243.7" y1="367.9" x2="1714.5" y2="-169.0" stroke="#555555" stroke-width="0.95" opacity="0.52"/><line x1="249.3" y1="379.2" x2="1716.0" y2="-154.3" stroke="#606060" stroke-width="0.80" opacity="0.25"/><line x1="254.9" y1="390.4" x2="1717.5" y2="-139.6" stroke="#555555" stroke-width="0.95" opacity="0.52"/><line x1="260.5" y1="401.5" x2="1719.0" y2="-125.1" stroke="#606060" stroke-width="0.80" opacity="0.25"/><line x1="266.1" y1="412.6" x2="1720.5" y2="-110.6" stroke="#555555" stroke-width="0.95" opacity="0.52"/><line x1="271.6" y1="423.6" x2="1722.0" y2="-96.2" stroke="#606060" stroke-width="0.80" opacity="0.25"/><line x1="277.1" y1="434.5" x2="1723.4" y2="-82.0" stroke="#464646" stroke-width="1.00" opacity="0.72"/><line x1="282.5" y1="445.4" x2="1724.9" y2="-67.8" stroke="#606060" stroke-width="0.80" opacity="0.25"/><line x1="288.0" y1="456.2" x2="1726.3" y2="-53.7" stroke="#555555" stroke-width="0.95" opacity="0.52"/><line x1="293.4" y1="467.0" x2="1727.8" y2="-39.7" stroke="#606060" stroke-width="0.80" opacity="0.25"/><line x1="298.7" y1="477.7" x2="1729.2" y2="-25.8" stroke="#555555" stroke-width="0.95" opacity="0.52"/><line x1="304.1" y1="488.3" x2="1730.6" y2="-12.0" stroke="#606060" stroke-width="0.80" opacity="0.25"/><line x1="309.4" y1="498.9" x2="1732.0" y2="1.7" stroke="#555555" stroke-width="0.95" opacity="0.52"/><line x1="314.6" y1="509.4" x2="1733.4" y2="15.3" stroke="#606060" stroke-width="0.80" opacity="0.25"/><line x1="319.9" y1="519.9" x2="1734.8" y2="28.9" stroke="#555555" stroke-width="0.95" opacity="0.52"/><line x1="325.1" y1="530.3" x2="1736.2" y2="42.3" stroke="#606060" stroke-width="0.80" opacity="0.25"/><line x1="330.3" y1="540.6" x2="1737.5" y2="55.7" stroke="#555555" stroke-width="0.95" opacity="0.52"/><line x1="335.4" y1="550.9" x2="1738.9" y2="69.0" stroke="#606060" stroke-width="0.80" opacity="0.25"/><line x1="340.5" y1="561.1" x2="1740.2" y2="82.2" stroke="#555555" stroke-width="0.95" opacity="0.52"/><line x1="345.6" y1="571.3" x2="1741.6" y2="95.3" stroke="#606060" stroke-width="0.80" opacity="0.25"/><line x1="350.7" y1="581.4" x2="1742.9" y2="108.3" stroke="#555555" stroke-width="0.95" opacity="0.52"/><line x1="355.7" y1="591.5" x2="1744.2" y2="121.2" stroke="#606060" stroke-width="0.80" opacity="0.25"/><line x1="360.8" y1="601.5" x2="1745.6" y2="134.1" stroke="#464646" stroke-width="1.00" opacity="0.72"/><line x1="-153.1" y1="-423.7" x2="-1734.7" y2="-1205.2" stroke="#464646" stroke-width="1.00" opacity="0.43"/><line x1="-136.7" y1="-391.0" x2="-1655.4" y2="-1095.2" stroke="#555555" stroke-width="0.95" opacity="0.31"/><line x1="-120.6" y1="-358.7" x2="-1579.2" y2="-989.7" stroke="#555555" stroke-width="0.95" opacity="0.31"/><line x1="-104.6" y1="-326.9" x2="-1506.0" y2="-888.3" stroke="#555555" stroke-width="0.95" opacity="0.31"/><line x1="-88.9" y1="-295.6" x2="-1435.6" y2="-790.7" stroke="#555555" stroke-width="0.95" opacity="0.31"/><line x1="-73.4" y1="-264.6" x2="-1367.9" y2="-696.9" stroke="#555555" stroke-width="0.95" opacity="0.31"/><line x1="-58.1" y1="-234.1" x2="-1302.7" y2="-606.5" stroke="#555555" stroke-width="0.95" opacity="0.31"/><line x1="-43.0" y1="-204.1" x2="-1239.8" y2="-519.4" stroke="#555555" stroke-width="0.95" opacity="0.31"/><line x1="-28.1" y1="-174.4" x2="-1179.2" y2="-435.4" stroke="#464646" stroke-width="1.00" opacity="0.43"/><line x1="-13.5" y1="-145.1" x2="-1120.7" y2="-354.3" stroke="#555555" stroke-width="0.95" opacity="0.31"/><line x1="1.0" y1="-116.2" x2="-1064.2" y2="-276.1" stroke="#555555" stroke-width="0.95" opacity="0.31"/><line x1="15.3" y1="-87.7" x2="-1009.6" y2="-200.5" stroke="#555555" stroke-width="0.95" opacity="0.31"/><line x1="29.4" y1="-59.5" x2="-956.9" y2="-127.4" stroke="#555555" stroke-width="0.95" opacity="0.31"/><line x1="43.3" y1="-31.8" x2="-905.9" y2="-56.7" stroke="#555555" stroke-width="0.95" opacity="0.31"/><line x1="57.1" y1="-4.4" x2="-856.5" y2="11.8" stroke="#555555" stroke-width="0.95" opacity="0.31"/><line x1="70.6" y1="22.7" x2="-808.6" y2="78.0" stroke="#555555" stroke-width="0.95" opacity="0.31"/><line x1="84.0" y1="49.4" x2="-762.3" y2="142.2" stroke="#464646" stroke-width="1.00" opacity="0.43"/><line x1="97.2" y1="75.8" x2="-717.4" y2="204.5" stroke="#555555" stroke-width="0.95" opacity="0.31"/><line x1="110.3" y1="101.8" x2="-673.9" y2="264.8" stroke="#555555" stroke-width="0.95" opacity="0.31"/><line x1="123.2" y1="127.5" x2="-631.6" y2="323.3" stroke="#555555" stroke-width="0.95" opacity="0.31"/><line x1="135.9" y1="152.9" x2="-590.6" y2="380.2" stroke="#555555" stroke-width="0.95" opacity="0.31"/><line x1="148.5" y1="178.0" x2="-550.8" y2="435.3" stroke="#555555" stroke-width="0.95" opacity="0.31"/><line x1="160.9" y1="202.7" x2="-512.1" y2="488.9" stroke="#555555" stroke-width="0.95" opacity="0.31"/><line x1="173.2" y1="227.2" x2="-474.5" y2="541.0" stroke="#555555" stroke-width="0.95" opacity="0.31"/><line x1="185.3" y1="251.4" x2="-438.0" y2="591.7" stroke="#464646" stroke-width="1.00" opacity="0.43"/><line x1="197.2" y1="275.2" x2="-402.4" y2="640.9" stroke="#555555" stroke-width="0.95" opacity="0.31"/><line x1="209.0" y1="298.8" x2="-367.8" y2="688.9" stroke="#555555" stroke-width="0.95" opacity="0.31"/><line x1="220.7" y1="322.1" x2="-334.1" y2="735.5" stroke="#555555" stroke-width="0.95" opacity="0.31"/><line x1="232.3" y1="345.1" x2="-301.3" y2="781.0" stroke="#555555" stroke-width="0.95" opacity="0.31"/><line x1="243.7" y1="367.9" x2="-269.4" y2="825.2" stroke="#555555" stroke-width="0.95" opacity="0.31"/><line x1="254.9" y1="390.4" x2="-238.3" y2="868.3" stroke="#555555" stroke-width="0.95" opacity="0.31"/><line x1="266.1" y1="412.6" x2="-208.0" y2="910.4" stroke="#555555" stroke-width="0.95" opacity="0.31"/><line x1="277.1" y1="434.5" x2="-178.4" y2="951.4" stroke="#464646" stroke-width="1.00" opacity="0.43"/><line x1="288.0" y1="456.2" x2="-149.5" y2="991.3" stroke="#555555" stroke-width="0.95" opacity="0.31"/><line x1="298.7" y1="477.7" x2="-121.4" y2="1030.3" stroke="#555555" stroke-width="0.95" opacity="0.31"/><line x1="309.4" y1="498.9" x2="-93.9" y2="1068.4" stroke="#555555" stroke-width="0.95" opacity="0.31"/><line x1="319.9" y1="519.9" x2="-67.1" y2="1105.5" stroke="#555555" stroke-width="0.95" opacity="0.31"/><line x1="330.3" y1="540.6" x2="-40.9" y2="1141.8" stroke="#555555" stroke-width="0.95" opacity="0.31"/><line x1="340.5" y1="561.1" x2="-15.4" y2="1177.2" stroke="#555555" stroke-width="0.95" opacity="0.31"/><line x1="350.7" y1="581.4" x2="9.6" y2="1211.9" stroke="#555555" stroke-width="0.95" opacity="0.31"/><line x1="360.8" y1="601.5" x2="34.1" y2="1245.7" stroke="#464646" stroke-width="1.00" opacity="0.43"/><line x1="-174.9" y1="-434.4" x2="354.4" y2="614.0" stroke="#555555" stroke-width="0.95" opacity="0.18"/><line x1="-197.8" y1="-445.8" x2="347.8" y2="627.1" stroke="#555555" stroke-width="0.95" opacity="0.18"/><line x1="-222.0" y1="-457.7" x2="340.8" y2="640.7" stroke="#555555" stroke-width="0.95" opacity="0.18"/><line x1="-247.6" y1="-470.4" x2="333.6" y2="655.0" stroke="#555555" stroke-width="0.95" opacity="0.18"/><line x1="-274.8" y1="-483.8" x2="326.1" y2="669.8" stroke="#464646" stroke-width="1.00" opacity="0.25"/><line x1="-303.5" y1="-498.0" x2="318.2" y2="685.4" stroke="#555555" stroke-width="0.95" opacity="0.18"/><line x1="-334.1" y1="-513.1" x2="310.0" y2="701.6" stroke="#555555" stroke-width="0.95" opacity="0.18"/><line x1="-366.6" y1="-529.2" x2="301.3" y2="718.6" stroke="#555555" stroke-width="0.95" opacity="0.18"/><line x1="-401.3" y1="-546.3" x2="292.3" y2="736.5" stroke="#555555" stroke-width="0.95" opacity="0.18"/><line x1="-438.4" y1="-564.6" x2="282.8" y2="755.2" stroke="#555555" stroke-width="0.95" opacity="0.18"/><line x1="-478.1" y1="-584.3" x2="272.8" y2="774.9" stroke="#555555" stroke-width="0.95" opacity="0.18"/><line x1="-520.8" y1="-605.4" x2="262.3" y2="795.7" stroke="#555555" stroke-width="0.95" opacity="0.18"/><line x1="-566.8" y1="-628.1" x2="251.2" y2="817.5" stroke="#464646" stroke-width="1.00" opacity="0.25"/><line x1="-616.4" y1="-652.6" x2="239.5" y2="840.6" stroke="#555555" stroke-width="0.95" opacity="0.18"/><line x1="-670.2" y1="-679.2" x2="227.1" y2="865.0" stroke="#555555" stroke-width="0.95" opacity="0.18"/><line x1="-728.7" y1="-708.1" x2="214.0" y2="890.8" stroke="#555555" stroke-width="0.95" opacity="0.18"/><line x1="-792.5" y1="-739.6" x2="200.2" y2="918.1" stroke="#555555" stroke-width="0.95" opacity="0.18"/><line x1="-862.3" y1="-774.1" x2="185.4" y2="947.2" stroke="#555555" stroke-width="0.95" opacity="0.18"/><line x1="-939.2" y1="-812.1" x2="169.7" y2="978.2" stroke="#555555" stroke-width="0.95" opacity="0.18"/><line x1="-1024.2" y1="-854.1" x2="153.0" y2="1011.2" stroke="#555555" stroke-width="0.95" opacity="0.18"/><line x1="-1118.6" y1="-900.7" x2="135.1" y2="1046.4" stroke="#464646" stroke-width="1.00" opacity="0.25"/><line x1="-1224.1" y1="-952.9" x2="116.0" y2="1084.2" stroke="#555555" stroke-width="0.95" opacity="0.18"/><line x1="-1342.9" y1="-1011.6" x2="95.4" y2="1124.8" stroke="#555555" stroke-width="0.95" opacity="0.18"/><line x1="-1477.5" y1="-1078.1" x2="73.2" y2="1168.4" stroke="#555555" stroke-width="0.95" opacity="0.18"/><line x1="-1631.4" y1="-1154.1" x2="49.3" y2="1215.6" stroke="#555555" stroke-width="0.95" opacity="0.18"/><line x1="360.8" y1="601.5" x2="34.1" y2="1245.7" stroke="#464646" stroke-width="1.00" opacity="0.43"/><line x1="382.5" y1="594.1" x2="77.2" y2="1233.5" stroke="#555555" stroke-width="0.95" opacity="0.31"/><line x1="404.4" y1="586.7" x2="120.8" y2="1221.2" stroke="#555555" stroke-width="0.95" opacity="0.31"/><line x1="426.4" y1="579.3" x2="164.7" y2="1208.8" stroke="#555555" stroke-width="0.95" opacity="0.31"/><line x1="448.4" y1="571.9" x2="209.1" y2="1196.3" stroke="#555555" stroke-width="0.95" opacity="0.31"/><line x1="470.6" y1="564.4" x2="253.8" y2="1183.6" stroke="#555555" stroke-width="0.95" opacity="0.31"/><line x1="492.8" y1="556.9" x2="299.0" y2="1170.9" stroke="#555555" stroke-width="0.95" opacity="0.31"/><line x1="515.2" y1="549.3" x2="344.5" y2="1158.0" stroke="#555555" stroke-width="0.95" opacity="0.31"/><line x1="537.6" y1="541.8" x2="390.5" y2="1145.0" stroke="#464646" stroke-width="1.00" opacity="0.43"/><line x1="560.2" y1="534.1" x2="436.9" y2="1131.9" stroke="#555555" stroke-width="0.95" opacity="0.31"/><line x1="582.8" y1="526.5" x2="483.8" y2="1118.7" stroke="#555555" stroke-width="0.95" opacity="0.31"/><line x1="605.6" y1="518.8" x2="531.0" y2="1105.3" stroke="#555555" stroke-width="0.95" opacity="0.31"/><line x1="628.5" y1="511.1" x2="578.8" y2="1091.9" stroke="#555555" stroke-width="0.95" opacity="0.31"/><line x1="651.4" y1="503.4" x2="626.9" y2="1078.3" stroke="#555555" stroke-width="0.95" opacity="0.31"/><line x1="674.5" y1="495.6" x2="675.5" y2="1064.5" stroke="#555555" stroke-width="0.95" opacity="0.31"/><line x1="697.6" y1="487.8" x2="724.6" y2="1050.7" stroke="#555555" stroke-width="0.95" opacity="0.31"/><line x1="720.9" y1="479.9" x2="774.2" y2="1036.7" stroke="#464646" stroke-width="1.00" opacity="0.43"/><line x1="744.3" y1="472.0" x2="824.2" y2="1022.5" stroke="#555555" stroke-width="0.95" opacity="0.31"/><line x1="767.7" y1="464.1" x2="874.7" y2="1008.3" stroke="#555555" stroke-width="0.95" opacity="0.31"/><line x1="791.3" y1="456.1" x2="925.7" y2="993.9" stroke="#555555" stroke-width="0.95" opacity="0.31"/><line x1="815.0" y1="448.2" x2="977.2" y2="979.3" stroke="#555555" stroke-width="0.95" opacity="0.31"/><line x1="838.8" y1="440.1" x2="1029.2" y2="964.6" stroke="#555555" stroke-width="0.95" opacity="0.31"/><line x1="862.7" y1="432.1" x2="1081.7" y2="949.8" stroke="#555555" stroke-width="0.95" opacity="0.31"/><line x1="886.7" y1="424.0" x2="1134.7" y2="934.8" stroke="#555555" stroke-width="0.95" opacity="0.31"/><line x1="910.8" y1="415.8" x2="1188.3" y2="919.7" stroke="#464646" stroke-width="1.00" opacity="0.43"/><line x1="935.1" y1="407.6" x2="1242.3" y2="904.4" stroke="#555555" stroke-width="0.95" opacity="0.31"/><line x1="959.4" y1="399.4" x2="1297.0" y2="889.0" stroke="#555555" stroke-width="0.95" opacity="0.31"/><line x1="983.9" y1="391.2" x2="1352.1" y2="873.4" stroke="#555555" stroke-width="0.95" opacity="0.31"/><line x1="1008.4" y1="382.9" x2="1407.9" y2="857.7" stroke="#555555" stroke-width="0.95" opacity="0.31"/><line x1="1033.1" y1="374.5" x2="1464.2" y2="841.8" stroke="#555555" stroke-width="0.95" opacity="0.31"/><line x1="1057.9" y1="366.2" x2="1521.0" y2="825.7" stroke="#555555" stroke-width="0.95" opacity="0.31"/><line x1="1082.8" y1="357.8" x2="1578.5" y2="809.5" stroke="#555555" stroke-width="0.95" opacity="0.31"/><line x1="1107.9" y1="349.3" x2="1636.6" y2="793.1" stroke="#464646" stroke-width="1.00" opacity="0.43"/><line x1="1133.0" y1="340.8" x2="1695.2" y2="776.5" stroke="#555555" stroke-width="0.95" opacity="0.31"/><line x1="1158.3" y1="332.3" x2="1754.5" y2="759.8" stroke="#555555" stroke-width="0.95" opacity="0.31"/><line x1="1183.6" y1="323.7" x2="1814.4" y2="742.9" stroke="#555555" stroke-width="0.95" opacity="0.31"/><line x1="1209.1" y1="315.1" x2="1874.9" y2="725.8" stroke="#555555" stroke-width="0.95" opacity="0.31"/><line x1="1234.8" y1="306.5" x2="1936.0" y2="708.5" stroke="#555555" stroke-width="0.95" opacity="0.31"/><line x1="1260.5" y1="297.8" x2="1997.8" y2="691.0" stroke="#555555" stroke-width="0.95" opacity="0.31"/><line x1="1286.4" y1="289.1" x2="2060.3" y2="673.4" stroke="#555555" stroke-width="0.95" opacity="0.31"/><line x1="1312.3" y1="280.3" x2="2123.5" y2="655.6" stroke="#464646" stroke-width="1.00" opacity="0.43"/><line x1="1338.5" y1="271.5" x2="2187.3" y2="637.5" stroke="#555555" stroke-width="0.95" opacity="0.31"/><line x1="1364.7" y1="262.6" x2="2251.8" y2="619.3" stroke="#555555" stroke-width="0.95" opacity="0.31"/><line x1="1391.1" y1="253.7" x2="2317.0" y2="600.9" stroke="#555555" stroke-width="0.95" opacity="0.31"/><line x1="1417.5" y1="244.8" x2="2383.0" y2="582.3" stroke="#555555" stroke-width="0.95" opacity="0.31"/><line x1="1444.2" y1="235.8" x2="2449.7" y2="563.4" stroke="#555555" stroke-width="0.95" opacity="0.31"/><line x1="1470.9" y1="226.8" x2="2517.1" y2="544.4" stroke="#555555" stroke-width="0.95" opacity="0.31"/><line x1="1497.8" y1="217.7" x2="2585.3" y2="525.1" stroke="#555555" stroke-width="0.95" opacity="0.31"/><line x1="1524.8" y1="208.6" x2="2654.2" y2="505.7" stroke="#464646" stroke-width="1.00" opacity="0.43"/><line x1="1551.9" y1="199.5" x2="2723.9" y2="486.0" stroke="#555555" stroke-width="0.95" opacity="0.31"/><line x1="1579.2" y1="190.3" x2="2794.5" y2="466.1" stroke="#555555" stroke-width="0.95" opacity="0.31"/><line x1="1606.5" y1="181.0" x2="2865.8" y2="445.9" stroke="#555555" stroke-width="0.95" opacity="0.31"/><line x1="1634.1" y1="171.7" x2="2937.9" y2="425.5" stroke="#555555" stroke-width="0.95" opacity="0.31"/><line x1="1661.7" y1="162.4" x2="3010.9" y2="404.9" stroke="#555555" stroke-width="0.95" opacity="0.31"/><line x1="1689.5" y1="153.0" x2="3084.7" y2="384.1" stroke="#555555" stroke-width="0.95" opacity="0.31"/><line x1="1717.5" y1="143.6" x2="3159.4" y2="363.0" stroke="#555555" stroke-width="0.95" opacity="0.31"/><line x1="1745.6" y1="134.1" x2="3235.0" y2="341.6" stroke="#464646" stroke-width="1.00" opacity="0.43"/><line x1="354.4" y1="614.0" x2="1770.5" y2="137.6" stroke="#555555" stroke-width="0.95" opacity="0.23"/><line x1="347.8" y1="627.1" x2="1796.6" y2="141.2" stroke="#555555" stroke-width="0.95" opacity="0.23"/><line x1="340.8" y1="640.7" x2="1823.9" y2="145.0" stroke="#555555" stroke-width="0.95" opacity="0.23"/><line x1="333.6" y1="655.0" x2="1852.7" y2="149.0" stroke="#555555" stroke-width="0.95" opacity="0.23"/><line x1="326.1" y1="669.8" x2="1882.9" y2="153.2" stroke="#464646" stroke-width="1.00" opacity="0.32"/><line x1="318.2" y1="685.4" x2="1914.7" y2="157.7" stroke="#555555" stroke-width="0.95" opacity="0.23"/><line x1="310.0" y1="701.6" x2="1948.2" y2="162.3" stroke="#555555" stroke-width="0.95" opacity="0.23"/><line x1="301.3" y1="718.6" x2="1983.6" y2="167.3" stroke="#555555" stroke-width="0.95" opacity="0.23"/><line x1="292.3" y1="736.5" x2="2021.0" y2="172.5" stroke="#555555" stroke-width="0.95" opacity="0.23"/><line x1="282.8" y1="755.2" x2="2060.6" y2="178.0" stroke="#555555" stroke-width="0.95" opacity="0.23"/><line x1="272.8" y1="774.9" x2="2102.6" y2="183.9" stroke="#555555" stroke-width="0.95" opacity="0.23"/><line x1="262.3" y1="795.7" x2="2147.2" y2="190.1" stroke="#555555" stroke-width="0.95" opacity="0.23"/><line x1="251.2" y1="817.5" x2="2194.7" y2="196.7" stroke="#464646" stroke-width="1.00" opacity="0.32"/><line x1="239.5" y1="840.6" x2="2245.4" y2="203.7" stroke="#555555" stroke-width="0.95" opacity="0.23"/><line x1="227.1" y1="865.0" x2="2299.6" y2="211.3" stroke="#555555" stroke-width="0.95" opacity="0.23"/><line x1="214.0" y1="890.8" x2="2357.6" y2="219.4" stroke="#555555" stroke-width="0.95" opacity="0.23"/><line x1="200.2" y1="918.1" x2="2419.9" y2="228.1" stroke="#555555" stroke-width="0.95" opacity="0.23"/><line x1="185.4" y1="947.2" x2="2487.0" y2="237.4" stroke="#555555" stroke-width="0.95" opacity="0.23"/><line x1="169.7" y1="978.2" x2="2559.5" y2="247.5" stroke="#555555" stroke-width="0.95" opacity="0.23"/><line x1="153.0" y1="1011.2" x2="2638.0" y2="258.4" stroke="#555555" stroke-width="0.95" opacity="0.23"/><line x1="135.1" y1="1046.4" x2="2723.3" y2="270.3" stroke="#464646" stroke-width="1.00" opacity="0.32"/><line x1="116.0" y1="1084.2" x2="2816.3" y2="283.3" stroke="#555555" stroke-width="0.95" opacity="0.23"/><line x1="95.4" y1="1124.8" x2="2918.3" y2="297.5" stroke="#555555" stroke-width="0.95" opacity="0.23"/><line x1="73.2" y1="1168.4" x2="3030.3" y2="313.1" stroke="#555555" stroke-width="0.95" opacity="0.23"/><line x1="49.3" y1="1215.6" x2="3154.2" y2="330.4" stroke="#555555" stroke-width="0.95" opacity="0.23"/></g><line x1="360.8" y1="601.5" x2="34.1" y2="1245.7" stroke="#464646" stroke-width="1.00" opacity="0.72"/>
 
<g filter="url(#glow2)" opacity="0.23"><path d="M450.7,321.6C448.1,314.8 446.4,305.2 444.5,299.5C442.7,293.8 441.3,290.9 439.6,287.2C438.0,283.6 435.8,280.9 434.7,277.4C433.6,273.9 432.7,269.7 433.0,266.4C433.3,263.1 435.0,259.8 436.7,257.8C438.4,255.8 442.0,254.9 443.3,254.6C444.6,254.3 444.5,255.8 444.5,255.8C444.5,255.8 441.9,249.5 441.6,245.5C441.3,241.6 441.7,235.7 442.6,232.0C443.5,228.3 445.2,225.2 447.0,223.4C448.8,221.7 451.1,221.4 453.1,221.7C455.2,222.0 458.0,224.5 459.3,225.4C460.5,226.3 460.7,226.9 460.7,226.9C460.7,226.9 458.7,218.1 458.5,213.6C458.4,209.2 458.6,203.7 459.8,200.1C460.9,196.6 463.2,193.8 465.4,192.3C467.6,190.8 470.5,190.8 472.8,191.0C475.0,191.2 477.7,192.9 478.9,193.5C480.1,194.1 479.9,194.5 479.9,194.5C479.9,194.5 479.2,183.6 479.6,179.3C480.1,174.9 481.1,170.9 482.6,168.2C484.1,165.6 486.3,164.0 488.7,163.3C491.2,162.6 494.6,162.6 497.3,163.8C500.0,165.0 502.2,167.3 504.7,170.7C507.1,174.1 510.1,180.1 512.0,184.2C513.9,188.3 515.3,194.2 516.2,195.2C517.1,196.2 517.4,190.3 517.4,190.3C517.4,190.3 517.2,177.8 518.2,173.1C519.1,168.4 520.6,165.2 523.1,162.1C525.5,158.9 529.4,155.7 532.9,154.2C536.4,152.8 540.2,152.5 543.9,153.5C547.6,154.5 551.7,157.1 555.0,160.1C558.2,163.2 561.0,167.5 563.6,171.9C566.1,176.3 568.3,181.7 570.2,186.6C572.0,191.5 573.3,196.4 574.6,201.3C575.9,206.3 576.4,211.6 577.8,216.1C579.2,220.6 580.9,224.3 583.2,228.3C585.5,232.4 589.1,236.1 591.8,240.6C594.4,245.1 597.1,250.0 599.1,255.3C601.2,260.7 602.7,266.4 604.0,272.5C605.4,278.7 606.4,285.6 607.2,292.1C608.1,298.7 608.6,304.8 609.0,311.8C609.3,318.7 609.4,333.9 609.4,333.9C609.4,333.9 609.0,334.1 609.0,334.1C609.0,334.1 615.9,333.6 620.2,334.7C624.5,335.8 630.3,337.7 634.9,340.6C639.6,343.6 644.5,348.0 648.2,352.4C651.9,356.8 654.8,362.2 657.0,367.1C659.2,372.0 660.6,376.9 661.4,381.8C662.3,386.7 661.8,392.4 662.0,396.6C662.3,400.7 661.8,403.7 662.9,406.9C664.0,410.0 667.2,412.0 668.8,415.7C670.4,419.4 671.8,423.8 672.6,428.9C673.5,434.1 673.8,440.2 673.8,446.6C673.8,453.0 673.2,459.9 672.6,467.2C672.0,474.6 671.2,483.4 670.3,490.8C669.4,498.1 668.6,505.5 667.3,511.4C666.1,517.3 664.9,521.9 662.9,526.1C660.9,530.3 658.2,533.9 655.6,536.4C652.9,539.0 650.7,540.5 646.7,541.4C642.8,542.4 636.4,542.1 631.8,542.1C627.2,542.1 623.5,542.3 619.4,541.5C615.3,540.7 611.2,539.2 607.1,537.2C603.0,535.2 598.8,532.6 594.7,529.2C590.6,525.8 586.5,521.8 582.4,516.8C578.3,511.7 573.7,504.9 570.0,498.9C566.3,492.9 563.7,487.2 560.0,480.8C556.3,474.4 551.9,467.3 548.0,460.5C544.1,453.7 539.3,445.0 536.4,440.0C533.5,435.0 532.7,434.0 530.4,430.4C528.1,426.8 526.0,423.2 522.5,418.6C519.0,414.0 514.2,408.7 509.5,403.0C504.8,397.3 500.0,391.3 494.4,384.5C488.8,377.7 481.6,369.6 475.8,362.2C470.0,354.8 464.0,346.8 459.8,340.0C455.6,333.2 453.2,328.3 450.7,321.6ZM517.7,189.1C517.7,189.1 518.1,196.9 519.4,201.3C520.7,205.8 523.2,210.6 525.5,216.1C527.9,221.6 530.9,230.5 533.4,234.5C535.8,238.5 538.1,239.7 540.2,240.1C542.4,240.5 546.2,238.5 546.4,236.9C546.6,235.4 543.7,233.3 541.5,230.8C539.2,228.3 535.7,225.9 532.9,222.2C530.0,218.5 526.5,213.0 524.3,208.7C522.0,204.4 520.5,199.7 519.4,196.4C518.3,193.2 517.7,189.1 517.7,189.1ZM494.8,220.5C494.8,220.5 493.7,227.0 494.4,230.8C495.0,234.6 497.0,240.1 498.5,243.1C500.0,246.0 502.2,247.9 503.4,248.5C504.7,249.1 505.9,248.9 505.9,246.7C505.9,244.6 504.5,239.2 503.4,235.7C502.4,232.2 501.2,228.4 499.8,225.9C498.3,223.4 494.8,220.5 494.8,220.5ZM470.8,239.4C470.8,239.4 471.6,246.9 472.8,250.4C473.9,254.0 476.2,258.9 477.7,260.7C479.1,262.6 480.9,262.6 481.3,261.5C481.8,260.4 481.1,257.0 480.1,254.1C479.1,251.2 476.8,246.7 475.2,244.3C473.7,241.8 470.8,239.4 470.8,239.4ZM457.3,267.6C457.3,267.6 459.1,275.4 460.5,278.7C461.8,281.9 464.4,286.1 465.4,287.2C466.4,288.3 466.9,287.1 466.6,285.3C466.3,283.4 465.2,279.1 463.7,276.2C462.1,273.3 457.3,267.6 457.3,267.6Z" fill="#ffecc8" fill-rule="evenodd"/><path d="M663.6,283.2C656.7,274.9 653.1,265.0 648.9,256.7C644.7,248.3 641.5,241.0 638.6,233.1C635.6,225.3 633.9,216.4 631.2,209.6C628.5,202.7 625.3,197.8 622.4,191.9C619.4,186.0 615.9,180.6 613.6,174.2C611.2,167.8 609.2,160.0 608.3,153.6C607.3,147.2 607.0,141.3 607.7,135.9C608.3,130.5 609.6,125.1 612.1,121.2C614.5,117.3 618.7,113.9 622.4,112.4C626.1,110.9 630.5,111.4 634.2,112.4C637.8,113.4 642.6,117.4 644.5,118.3C646.3,119.1 645.4,117.4 645.4,117.4C645.4,117.4 643.6,109.9 644.5,106.5C645.3,103.1 647.9,99.1 650.4,97.1C652.8,95.0 656.0,93.8 659.2,94.1C662.4,94.5 666.6,96.8 669.5,99.1C672.4,101.4 674.7,104.5 676.9,108.0C679.1,111.4 681.7,117.9 682.7,119.7C683.8,121.6 683.3,118.9 683.3,118.9C683.3,118.9 683.1,112.1 684.2,109.4C685.3,106.8 687.7,104.2 690.1,103.0C692.6,101.7 696.0,101.2 698.9,102.1C701.9,102.9 705.1,105.0 707.8,108.0C710.5,110.9 713.2,116.1 715.1,119.7C717.1,123.4 718.7,128.5 719.6,130.1C720.4,131.6 720.1,129.2 720.1,129.2C720.1,129.2 719.9,122.3 721.0,119.7C722.2,117.2 724.5,114.8 726.9,113.9C729.4,112.9 732.8,112.6 735.7,113.9C738.7,115.1 742.1,118.0 744.6,121.2C747.0,124.4 749.2,130.3 750.5,133.0C751.7,135.7 751.5,137.1 751.9,137.7C752.3,138.3 752.8,136.5 752.8,136.5C752.8,136.5 753.1,133.7 754.9,133.0C756.7,132.3 761.0,131.4 763.7,132.4C766.4,133.4 768.9,135.8 771.1,138.9C773.3,141.9 775.3,147.0 777.0,150.7C778.7,154.3 779.2,156.6 781.4,161.0C783.6,165.4 787.3,171.0 790.2,177.2C793.2,183.3 796.6,190.9 799.1,197.8C801.5,204.6 803.5,211.5 804.9,218.4C806.4,225.3 807.1,231.6 807.9,239.0C808.6,246.4 808.9,254.7 809.4,262.6C809.8,270.4 810.1,279.2 810.8,286.1C811.6,293.0 812.8,299.2 813.8,303.8C814.7,308.3 815.2,307.0 816.7,313.6C818.1,320.1 820.3,333.7 822.6,343.0C824.8,352.3 827.5,360.7 829.9,369.5C832.4,378.3 835.6,388.1 837.3,396.0C839.0,403.8 839.6,409.7 840.2,416.6C840.9,423.5 841.3,430.3 841.1,437.2C840.9,444.1 840.1,451.5 838.7,457.8C837.4,464.2 835.6,470.3 832.9,475.5C830.2,480.6 826.2,485.3 822.6,488.7C818.9,492.2 814.7,494.5 810.8,496.1C806.8,497.7 802.9,498.0 799.0,498.2C795.1,498.3 790.9,498.1 787.2,497.0C783.5,495.9 780.3,494.3 776.9,491.7C773.5,489.1 770.0,484.9 766.6,481.4C763.2,477.8 759.7,474.4 756.3,470.3C752.9,466.2 749.4,461.4 746.0,456.6C742.6,451.7 738.9,446.9 735.7,441.2C732.5,435.5 729.3,428.6 726.9,422.5C724.4,416.4 722.1,410.7 721.0,404.8C719.8,398.9 720.2,393.1 720.1,387.2C720.0,381.3 720.5,374.9 720.4,369.5C720.3,364.1 720.6,360.2 719.5,354.8C718.4,349.4 716.3,342.8 713.6,337.1C710.9,331.5 707.2,326.1 703.3,320.9C699.4,315.8 696.7,312.5 690.1,306.2C683.4,299.9 670.5,291.4 663.6,283.2ZM661.5,148.3C661.5,148.3 661.5,162.3 661.3,168.3C661.0,174.4 659.7,180.6 660.1,184.5C660.5,188.5 662.1,190.8 663.6,191.9C665.1,193.0 667.4,192.0 668.9,191.3C670.4,190.6 672.2,190.3 672.4,187.5C672.6,184.6 671.3,179.1 670.1,174.2C668.9,169.3 666.5,162.3 665.1,158.0C663.7,153.7 661.5,148.3 661.5,148.3ZM687.2,141.8C687.2,141.8 688.9,151.4 691.6,156.6C694.3,161.7 701.0,170.3 703.4,172.7C705.7,175.2 706.2,173.7 705.7,171.3C705.2,168.8 702.8,162.2 700.4,158.0C698.1,153.9 693.8,148.9 691.6,146.2C689.4,143.5 687.2,141.8 687.2,141.8ZM721.0,144.8C721.0,144.8 723.7,154.3 725.4,158.0C727.2,161.7 730.0,165.6 731.3,166.9C732.7,168.1 733.8,167.6 733.4,165.4C733.0,163.2 731.0,157.0 729.0,153.6C726.9,150.2 721.0,144.8 721.0,144.8ZM752.8,160.1C752.8,160.1 754.9,165.9 756.4,168.3C757.8,170.8 760.9,174.6 761.7,174.8C762.4,175.1 761.7,171.7 760.8,169.8C759.9,167.9 757.7,164.9 756.4,163.3C755.0,161.7 752.8,160.1 752.8,160.1Z" fill="#ffecc8" fill-rule="evenodd"/></g>
<g filter="url(#glow)" opacity="0.06"><path d="M450.7,321.6C448.1,314.8 446.4,305.2 444.5,299.5C442.7,293.8 441.3,290.9 439.6,287.2C438.0,283.6 435.8,280.9 434.7,277.4C433.6,273.9 432.7,269.7 433.0,266.4C433.3,263.1 435.0,259.8 436.7,257.8C438.4,255.8 442.0,254.9 443.3,254.6C444.6,254.3 444.5,255.8 444.5,255.8C444.5,255.8 441.9,249.5 441.6,245.5C441.3,241.6 441.7,235.7 442.6,232.0C443.5,228.3 445.2,225.2 447.0,223.4C448.8,221.7 451.1,221.4 453.1,221.7C455.2,222.0 458.0,224.5 459.3,225.4C460.5,226.3 460.7,226.9 460.7,226.9C460.7,226.9 458.7,218.1 458.5,213.6C458.4,209.2 458.6,203.7 459.8,200.1C460.9,196.6 463.2,193.8 465.4,192.3C467.6,190.8 470.5,190.8 472.8,191.0C475.0,191.2 477.7,192.9 478.9,193.5C480.1,194.1 479.9,194.5 479.9,194.5C479.9,194.5 479.2,183.6 479.6,179.3C480.1,174.9 481.1,170.9 482.6,168.2C484.1,165.6 486.3,164.0 488.7,163.3C491.2,162.6 494.6,162.6 497.3,163.8C500.0,165.0 502.2,167.3 504.7,170.7C507.1,174.1 510.1,180.1 512.0,184.2C513.9,188.3 515.3,194.2 516.2,195.2C517.1,196.2 517.4,190.3 517.4,190.3C517.4,190.3 517.2,177.8 518.2,173.1C519.1,168.4 520.6,165.2 523.1,162.1C525.5,158.9 529.4,155.7 532.9,154.2C536.4,152.8 540.2,152.5 543.9,153.5C547.6,154.5 551.7,157.1 555.0,160.1C558.2,163.2 561.0,167.5 563.6,171.9C566.1,176.3 568.3,181.7 570.2,186.6C572.0,191.5 573.3,196.4 574.6,201.3C575.9,206.3 576.4,211.6 577.8,216.1C579.2,220.6 580.9,224.3 583.2,228.3C585.5,232.4 589.1,236.1 591.8,240.6C594.4,245.1 597.1,250.0 599.1,255.3C601.2,260.7 602.7,266.4 604.0,272.5C605.4,278.7 606.4,285.6 607.2,292.1C608.1,298.7 608.6,304.8 609.0,311.8C609.3,318.7 609.4,333.9 609.4,333.9C609.4,333.9 609.0,334.1 609.0,334.1C609.0,334.1 615.9,333.6 620.2,334.7C624.5,335.8 630.3,337.7 634.9,340.6C639.6,343.6 644.5,348.0 648.2,352.4C651.9,356.8 654.8,362.2 657.0,367.1C659.2,372.0 660.6,376.9 661.4,381.8C662.3,386.7 661.8,392.4 662.0,396.6C662.3,400.7 661.8,403.7 662.9,406.9C664.0,410.0 667.2,412.0 668.8,415.7C670.4,419.4 671.8,423.8 672.6,428.9C673.5,434.1 673.8,440.2 673.8,446.6C673.8,453.0 673.2,459.9 672.6,467.2C672.0,474.6 671.2,483.4 670.3,490.8C669.4,498.1 668.6,505.5 667.3,511.4C666.1,517.3 664.9,521.9 662.9,526.1C660.9,530.3 658.2,533.9 655.6,536.4C652.9,539.0 650.7,540.5 646.7,541.4C642.8,542.4 636.4,542.1 631.8,542.1C627.2,542.1 623.5,542.3 619.4,541.5C615.3,540.7 611.2,539.2 607.1,537.2C603.0,535.2 598.8,532.6 594.7,529.2C590.6,525.8 586.5,521.8 582.4,516.8C578.3,511.7 573.7,504.9 570.0,498.9C566.3,492.9 563.7,487.2 560.0,480.8C556.3,474.4 551.9,467.3 548.0,460.5C544.1,453.7 539.3,445.0 536.4,440.0C533.5,435.0 532.7,434.0 530.4,430.4C528.1,426.8 526.0,423.2 522.5,418.6C519.0,414.0 514.2,408.7 509.5,403.0C504.8,397.3 500.0,391.3 494.4,384.5C488.8,377.7 481.6,369.6 475.8,362.2C470.0,354.8 464.0,346.8 459.8,340.0C455.6,333.2 453.2,328.3 450.7,321.6ZM517.7,189.1C517.7,189.1 518.1,196.9 519.4,201.3C520.7,205.8 523.2,210.6 525.5,216.1C527.9,221.6 530.9,230.5 533.4,234.5C535.8,238.5 538.1,239.7 540.2,240.1C542.4,240.5 546.2,238.5 546.4,236.9C546.6,235.4 543.7,233.3 541.5,230.8C539.2,228.3 535.7,225.9 532.9,222.2C530.0,218.5 526.5,213.0 524.3,208.7C522.0,204.4 520.5,199.7 519.4,196.4C518.3,193.2 517.7,189.1 517.7,189.1ZM494.8,220.5C494.8,220.5 493.7,227.0 494.4,230.8C495.0,234.6 497.0,240.1 498.5,243.1C500.0,246.0 502.2,247.9 503.4,248.5C504.7,249.1 505.9,248.9 505.9,246.7C505.9,244.6 504.5,239.2 503.4,235.7C502.4,232.2 501.2,228.4 499.8,225.9C498.3,223.4 494.8,220.5 494.8,220.5ZM470.8,239.4C470.8,239.4 471.6,246.9 472.8,250.4C473.9,254.0 476.2,258.9 477.7,260.7C479.1,262.6 480.9,262.6 481.3,261.5C481.8,260.4 481.1,257.0 480.1,254.1C479.1,251.2 476.8,246.7 475.2,244.3C473.7,241.8 470.8,239.4 470.8,239.4ZM457.3,267.6C457.3,267.6 459.1,275.4 460.5,278.7C461.8,281.9 464.4,286.1 465.4,287.2C466.4,288.3 466.9,287.1 466.6,285.3C466.3,283.4 465.2,279.1 463.7,276.2C462.1,273.3 457.3,267.6 457.3,267.6Z" fill="#ffecc8" fill-rule="evenodd"/><path d="M663.6,283.2C656.7,274.9 653.1,265.0 648.9,256.7C644.7,248.3 641.5,241.0 638.6,233.1C635.6,225.3 633.9,216.4 631.2,209.6C628.5,202.7 625.3,197.8 622.4,191.9C619.4,186.0 615.9,180.6 613.6,174.2C611.2,167.8 609.2,160.0 608.3,153.6C607.3,147.2 607.0,141.3 607.7,135.9C608.3,130.5 609.6,125.1 612.1,121.2C614.5,117.3 618.7,113.9 622.4,112.4C626.1,110.9 630.5,111.4 634.2,112.4C637.8,113.4 642.6,117.4 644.5,118.3C646.3,119.1 645.4,117.4 645.4,117.4C645.4,117.4 643.6,109.9 644.5,106.5C645.3,103.1 647.9,99.1 650.4,97.1C652.8,95.0 656.0,93.8 659.2,94.1C662.4,94.5 666.6,96.8 669.5,99.1C672.4,101.4 674.7,104.5 676.9,108.0C679.1,111.4 681.7,117.9 682.7,119.7C683.8,121.6 683.3,118.9 683.3,118.9C683.3,118.9 683.1,112.1 684.2,109.4C685.3,106.8 687.7,104.2 690.1,103.0C692.6,101.7 696.0,101.2 698.9,102.1C701.9,102.9 705.1,105.0 707.8,108.0C710.5,110.9 713.2,116.1 715.1,119.7C717.1,123.4 718.7,128.5 719.6,130.1C720.4,131.6 720.1,129.2 720.1,129.2C720.1,129.2 719.9,122.3 721.0,119.7C722.2,117.2 724.5,114.8 726.9,113.9C729.4,112.9 732.8,112.6 735.7,113.9C738.7,115.1 742.1,118.0 744.6,121.2C747.0,124.4 749.2,130.3 750.5,133.0C751.7,135.7 751.5,137.1 751.9,137.7C752.3,138.3 752.8,136.5 752.8,136.5C752.8,136.5 753.1,133.7 754.9,133.0C756.7,132.3 761.0,131.4 763.7,132.4C766.4,133.4 768.9,135.8 771.1,138.9C773.3,141.9 775.3,147.0 777.0,150.7C778.7,154.3 779.2,156.6 781.4,161.0C783.6,165.4 787.3,171.0 790.2,177.2C793.2,183.3 796.6,190.9 799.1,197.8C801.5,204.6 803.5,211.5 804.9,218.4C806.4,225.3 807.1,231.6 807.9,239.0C808.6,246.4 808.9,254.7 809.4,262.6C809.8,270.4 810.1,279.2 810.8,286.1C811.6,293.0 812.8,299.2 813.8,303.8C814.7,308.3 815.2,307.0 816.7,313.6C818.1,320.1 820.3,333.7 822.6,343.0C824.8,352.3 827.5,360.7 829.9,369.5C832.4,378.3 835.6,388.1 837.3,396.0C839.0,403.8 839.6,409.7 840.2,416.6C840.9,423.5 841.3,430.3 841.1,437.2C840.9,444.1 840.1,451.5 838.7,457.8C837.4,464.2 835.6,470.3 832.9,475.5C830.2,480.6 826.2,485.3 822.6,488.7C818.9,492.2 814.7,494.5 810.8,496.1C806.8,497.7 802.9,498.0 799.0,498.2C795.1,498.3 790.9,498.1 787.2,497.0C783.5,495.9 780.3,494.3 776.9,491.7C773.5,489.1 770.0,484.9 766.6,481.4C763.2,477.8 759.7,474.4 756.3,470.3C752.9,466.2 749.4,461.4 746.0,456.6C742.6,451.7 738.9,446.9 735.7,441.2C732.5,435.5 729.3,428.6 726.9,422.5C724.4,416.4 722.1,410.7 721.0,404.8C719.8,398.9 720.2,393.1 720.1,387.2C720.0,381.3 720.5,374.9 720.4,369.5C720.3,364.1 720.6,360.2 719.5,354.8C718.4,349.4 716.3,342.8 713.6,337.1C710.9,331.5 707.2,326.1 703.3,320.9C699.4,315.8 696.7,312.5 690.1,306.2C683.4,299.9 670.5,291.4 663.6,283.2ZM661.5,148.3C661.5,148.3 661.5,162.3 661.3,168.3C661.0,174.4 659.7,180.6 660.1,184.5C660.5,188.5 662.1,190.8 663.6,191.9C665.1,193.0 667.4,192.0 668.9,191.3C670.4,190.6 672.2,190.3 672.4,187.5C672.6,184.6 671.3,179.1 670.1,174.2C668.9,169.3 666.5,162.3 665.1,158.0C663.7,153.7 661.5,148.3 661.5,148.3ZM687.2,141.8C687.2,141.8 688.9,151.4 691.6,156.6C694.3,161.7 701.0,170.3 703.4,172.7C705.7,175.2 706.2,173.7 705.7,171.3C705.2,168.8 702.8,162.2 700.4,158.0C698.1,153.9 693.8,148.9 691.6,146.2C689.4,143.5 687.2,141.8 687.2,141.8ZM721.0,144.8C721.0,144.8 723.7,154.3 725.4,158.0C727.2,161.7 730.0,165.6 731.3,166.9C732.7,168.1 733.8,167.6 733.4,165.4C733.0,163.2 731.0,157.0 729.0,153.6C726.9,150.2 721.0,144.8 721.0,144.8ZM752.8,160.1C752.8,160.1 754.9,165.9 756.4,168.3C757.8,170.8 760.9,174.6 761.7,174.8C762.4,175.1 761.7,171.7 760.8,169.8C759.9,167.9 757.7,164.9 756.4,163.3C755.0,161.7 752.8,160.1 752.8,160.1Z" fill="#ffecc8" fill-rule="evenodd"/></g>
<path id="lf" d="M450.7,321.6C448.1,314.8 446.4,305.2 444.5,299.5C442.7,293.8 441.3,290.9 439.6,287.2C438.0,283.6 435.8,280.9 434.7,277.4C433.6,273.9 432.7,269.7 433.0,266.4C433.3,263.1 435.0,259.8 436.7,257.8C438.4,255.8 442.0,254.9 443.3,254.6C444.6,254.3 444.5,255.8 444.5,255.8C444.5,255.8 441.9,249.5 441.6,245.5C441.3,241.6 441.7,235.7 442.6,232.0C443.5,228.3 445.2,225.2 447.0,223.4C448.8,221.7 451.1,221.4 453.1,221.7C455.2,222.0 458.0,224.5 459.3,225.4C460.5,226.3 460.7,226.9 460.7,226.9C460.7,226.9 458.7,218.1 458.5,213.6C458.4,209.2 458.6,203.7 459.8,200.1C460.9,196.6 463.2,193.8 465.4,192.3C467.6,190.8 470.5,190.8 472.8,191.0C475.0,191.2 477.7,192.9 478.9,193.5C480.1,194.1 479.9,194.5 479.9,194.5C479.9,194.5 479.2,183.6 479.6,179.3C480.1,174.9 481.1,170.9 482.6,168.2C484.1,165.6 486.3,164.0 488.7,163.3C491.2,162.6 494.6,162.6 497.3,163.8C500.0,165.0 502.2,167.3 504.7,170.7C507.1,174.1 510.1,180.1 512.0,184.2C513.9,188.3 515.3,194.2 516.2,195.2C517.1,196.2 517.4,190.3 517.4,190.3C517.4,190.3 517.2,177.8 518.2,173.1C519.1,168.4 520.6,165.2 523.1,162.1C525.5,158.9 529.4,155.7 532.9,154.2C536.4,152.8 540.2,152.5 543.9,153.5C547.6,154.5 551.7,157.1 555.0,160.1C558.2,163.2 561.0,167.5 563.6,171.9C566.1,176.3 568.3,181.7 570.2,186.6C572.0,191.5 573.3,196.4 574.6,201.3C575.9,206.3 576.4,211.6 577.8,216.1C579.2,220.6 580.9,224.3 583.2,228.3C585.5,232.4 589.1,236.1 591.8,240.6C594.4,245.1 597.1,250.0 599.1,255.3C601.2,260.7 602.7,266.4 604.0,272.5C605.4,278.7 606.4,285.6 607.2,292.1C608.1,298.7 608.6,304.8 609.0,311.8C609.3,318.7 609.4,333.9 609.4,333.9C609.4,333.9 609.0,334.1 609.0,334.1C609.0,334.1 615.9,333.6 620.2,334.7C624.5,335.8 630.3,337.7 634.9,340.6C639.6,343.6 644.5,348.0 648.2,352.4C651.9,356.8 654.8,362.2 657.0,367.1C659.2,372.0 660.6,376.9 661.4,381.8C662.3,386.7 661.8,392.4 662.0,396.6C662.3,400.7 661.8,403.7 662.9,406.9C664.0,410.0 667.2,412.0 668.8,415.7C670.4,419.4 671.8,423.8 672.6,428.9C673.5,434.1 673.8,440.2 673.8,446.6C673.8,453.0 673.2,459.9 672.6,467.2C672.0,474.6 671.2,483.4 670.3,490.8C669.4,498.1 668.6,505.5 667.3,511.4C666.1,517.3 664.9,521.9 662.9,526.1C660.9,530.3 658.2,533.9 655.6,536.4C652.9,539.0 650.7,540.5 646.7,541.4C642.8,542.4 636.4,542.1 631.8,542.1C627.2,542.1 623.5,542.3 619.4,541.5C615.3,540.7 611.2,539.2 607.1,537.2C603.0,535.2 598.8,532.6 594.7,529.2C590.6,525.8 586.5,521.8 582.4,516.8C578.3,511.7 573.7,504.9 570.0,498.9C566.3,492.9 563.7,487.2 560.0,480.8C556.3,474.4 551.9,467.3 548.0,460.5C544.1,453.7 539.3,445.0 536.4,440.0C533.5,435.0 532.7,434.0 530.4,430.4C528.1,426.8 526.0,423.2 522.5,418.6C519.0,414.0 514.2,408.7 509.5,403.0C504.8,397.3 500.0,391.3 494.4,384.5C488.8,377.7 481.6,369.6 475.8,362.2C470.0,354.8 464.0,346.8 459.8,340.0C455.6,333.2 453.2,328.3 450.7,321.6ZM517.7,189.1C517.7,189.1 518.1,196.9 519.4,201.3C520.7,205.8 523.2,210.6 525.5,216.1C527.9,221.6 530.9,230.5 533.4,234.5C535.8,238.5 538.1,239.7 540.2,240.1C542.4,240.5 546.2,238.5 546.4,236.9C546.6,235.4 543.7,233.3 541.5,230.8C539.2,228.3 535.7,225.9 532.9,222.2C530.0,218.5 526.5,213.0 524.3,208.7C522.0,204.4 520.5,199.7 519.4,196.4C518.3,193.2 517.7,189.1 517.7,189.1ZM494.8,220.5C494.8,220.5 493.7,227.0 494.4,230.8C495.0,234.6 497.0,240.1 498.5,243.1C500.0,246.0 502.2,247.9 503.4,248.5C504.7,249.1 505.9,248.9 505.9,246.7C505.9,244.6 504.5,239.2 503.4,235.7C502.4,232.2 501.2,228.4 499.8,225.9C498.3,223.4 494.8,220.5 494.8,220.5ZM470.8,239.4C470.8,239.4 471.6,246.9 472.8,250.4C473.9,254.0 476.2,258.9 477.7,260.7C479.1,262.6 480.9,262.6 481.3,261.5C481.8,260.4 481.1,257.0 480.1,254.1C479.1,251.2 476.8,246.7 475.2,244.3C473.7,241.8 470.8,239.4 470.8,239.4ZM457.3,267.6C457.3,267.6 459.1,275.4 460.5,278.7C461.8,281.9 464.4,286.1 465.4,287.2C466.4,288.3 466.9,287.1 466.6,285.3C466.3,283.4 465.2,279.1 463.7,276.2C462.1,273.3 457.3,267.6 457.3,267.6Z" fill="#fff0d0" fill-rule="evenodd" shape-rendering="crispEdges"/>
<path id="rf" d="M663.6,283.2C656.7,274.9 653.1,265.0 648.9,256.7C644.7,248.3 641.5,241.0 638.6,233.1C635.6,225.3 633.9,216.4 631.2,209.6C628.5,202.7 625.3,197.8 622.4,191.9C619.4,186.0 615.9,180.6 613.6,174.2C611.2,167.8 609.2,160.0 608.3,153.6C607.3,147.2 607.0,141.3 607.7,135.9C608.3,130.5 609.6,125.1 612.1,121.2C614.5,117.3 618.7,113.9 622.4,112.4C626.1,110.9 630.5,111.4 634.2,112.4C637.8,113.4 642.6,117.4 644.5,118.3C646.3,119.1 645.4,117.4 645.4,117.4C645.4,117.4 643.6,109.9 644.5,106.5C645.3,103.1 647.9,99.1 650.4,97.1C652.8,95.0 656.0,93.8 659.2,94.1C662.4,94.5 666.6,96.8 669.5,99.1C672.4,101.4 674.7,104.5 676.9,108.0C679.1,111.4 681.7,117.9 682.7,119.7C683.8,121.6 683.3,118.9 683.3,118.9C683.3,118.9 683.1,112.1 684.2,109.4C685.3,106.8 687.7,104.2 690.1,103.0C692.6,101.7 696.0,101.2 698.9,102.1C701.9,102.9 705.1,105.0 707.8,108.0C710.5,110.9 713.2,116.1 715.1,119.7C717.1,123.4 718.7,128.5 719.6,130.1C720.4,131.6 720.1,129.2 720.1,129.2C720.1,129.2 719.9,122.3 721.0,119.7C722.2,117.2 724.5,114.8 726.9,113.9C729.4,112.9 732.8,112.6 735.7,113.9C738.7,115.1 742.1,118.0 744.6,121.2C747.0,124.4 749.2,130.3 750.5,133.0C751.7,135.7 751.5,137.1 751.9,137.7C752.3,138.3 752.8,136.5 752.8,136.5C752.8,136.5 753.1,133.7 754.9,133.0C756.7,132.3 761.0,131.4 763.7,132.4C766.4,133.4 768.9,135.8 771.1,138.9C773.3,141.9 775.3,147.0 777.0,150.7C778.7,154.3 779.2,156.6 781.4,161.0C783.6,165.4 787.3,171.0 790.2,177.2C793.2,183.3 796.6,190.9 799.1,197.8C801.5,204.6 803.5,211.5 804.9,218.4C806.4,225.3 807.1,231.6 807.9,239.0C808.6,246.4 808.9,254.7 809.4,262.6C809.8,270.4 810.1,279.2 810.8,286.1C811.6,293.0 812.8,299.2 813.8,303.8C814.7,308.3 815.2,307.0 816.7,313.6C818.1,320.1 820.3,333.7 822.6,343.0C824.8,352.3 827.5,360.7 829.9,369.5C832.4,378.3 835.6,388.1 837.3,396.0C839.0,403.8 839.6,409.7 840.2,416.6C840.9,423.5 841.3,430.3 841.1,437.2C840.9,444.1 840.1,451.5 838.7,457.8C837.4,464.2 835.6,470.3 832.9,475.5C830.2,480.6 826.2,485.3 822.6,488.7C818.9,492.2 814.7,494.5 810.8,496.1C806.8,497.7 802.9,498.0 799.0,498.2C795.1,498.3 790.9,498.1 787.2,497.0C783.5,495.9 780.3,494.3 776.9,491.7C773.5,489.1 770.0,484.9 766.6,481.4C763.2,477.8 759.7,474.4 756.3,470.3C752.9,466.2 749.4,461.4 746.0,456.6C742.6,451.7 738.9,446.9 735.7,441.2C732.5,435.5 729.3,428.6 726.9,422.5C724.4,416.4 722.1,410.7 721.0,404.8C719.8,398.9 720.2,393.1 720.1,387.2C720.0,381.3 720.5,374.9 720.4,369.5C720.3,364.1 720.6,360.2 719.5,354.8C718.4,349.4 716.3,342.8 713.6,337.1C710.9,331.5 707.2,326.1 703.3,320.9C699.4,315.8 696.7,312.5 690.1,306.2C683.4,299.9 670.5,291.4 663.6,283.2ZM661.5,148.3C661.5,148.3 661.5,162.3 661.3,168.3C661.0,174.4 659.7,180.6 660.1,184.5C660.5,188.5 662.1,190.8 663.6,191.9C665.1,193.0 667.4,192.0 668.9,191.3C670.4,190.6 672.2,190.3 672.4,187.5C672.6,184.6 671.3,179.1 670.1,174.2C668.9,169.3 666.5,162.3 665.1,158.0C663.7,153.7 661.5,148.3 661.5,148.3ZM687.2,141.8C687.2,141.8 688.9,151.4 691.6,156.6C694.3,161.7 701.0,170.3 703.4,172.7C705.7,175.2 706.2,173.7 705.7,171.3C705.2,168.8 702.8,162.2 700.4,158.0C698.1,153.9 693.8,148.9 691.6,146.2C689.4,143.5 687.2,141.8 687.2,141.8ZM721.0,144.8C721.0,144.8 723.7,154.3 725.4,158.0C727.2,161.7 730.0,165.6 731.3,166.9C732.7,168.1 733.8,167.6 733.4,165.4C733.0,163.2 731.0,157.0 729.0,153.6C726.9,150.2 721.0,144.8 721.0,144.8ZM752.8,160.1C752.8,160.1 754.9,165.9 756.4,168.3C757.8,170.8 760.9,174.6 761.7,174.8C762.4,175.1 761.7,171.7 760.8,169.8C759.9,167.9 757.7,164.9 756.4,163.3C755.0,161.7 752.8,160.1 752.8,160.1Z" fill="#fff0d0" fill-rule="evenodd" shape-rendering="crispEdges"/>
<g clip-path="url(#cl)"><ellipse cx="546.4" cy="199" rx="33" ry="36" fill="url(#bg)" opacity="0.95" transform="rotate(-20 546.4 199)"/><ellipse cx="538" cy="299" rx="78" ry="42" fill="url(#bg)" opacity="0.78" transform="rotate(-14 538 299)"/><ellipse cx="504" cy="315" rx="54" ry="44" fill="url(#bg)" opacity="0.68" transform="rotate(-10 504 315)"/><ellipse cx="617" cy="499" rx="44" ry="44" fill="url(#bg)" opacity="0.92" transform="rotate(0 617 499)"/><ellipse cx="494" cy="193" rx="15" ry="26" fill="url(#bt)" opacity="1" transform="rotate(-22 494 193)"/><ellipse cx="473" cy="213" rx="14" ry="22" fill="url(#bt)" opacity="1" transform="rotate(-25 473 213)"/><ellipse cx="452" cy="240" rx="13" ry="19" fill="url(#bt)" opacity="1" transform="rotate(-25 452 240)"/><ellipse cx="441" cy="272" rx="11" ry="16" fill="url(#bt)" opacity="1" transform="rotate(-20 441 272)"/></g>
<g clip-path="url(#cr)"><ellipse cx="634" cy="155" rx="32" ry="40" fill="url(#bg)" opacity="0.95" transform="rotate(-15 634 155)"/><ellipse cx="745" cy="222" rx="74" ry="42" fill="url(#bg)" opacity="0.78" transform="rotate(-14 745 222)"/><ellipse cx="705" cy="242" rx="58" ry="44" fill="url(#bg)" opacity="0.68" transform="rotate(-12 705 242)"/><ellipse cx="795" cy="441" rx="45" ry="49" fill="url(#bg)" opacity="0.92" transform="rotate(0 795 441)"/><ellipse cx="664" cy="119" rx="15" ry="26" fill="url(#bt)" opacity="1" transform="rotate(-20 664 119)"/><ellipse cx="700" cy="128" rx="15" ry="24" fill="url(#bt)" opacity="1" transform="rotate(-22 700 128)"/><ellipse cx="736" cy="136" rx="14" ry="20" fill="url(#bt)" opacity="1" transform="rotate(-25 736 136)"/><ellipse cx="765" cy="150" rx="12" ry="16" fill="url(#bt)" opacity="1" transform="rotate(-25 765 150)"/></g>

 <path d="M221.5,397.5 L221.5,413.8 L225.3,410.2 L228.3,416 L230.6,414.8 L227.7,409.2 L232.8,408.8 Z" fill="#fff" stroke="#000" stroke-width="1" stroke-linejoin="miter"/>
</g>
</svg>

<!-- ===== CONTROLS BAR ===== -->
<div class="a" style="left:140px;top:595px;width:993px;height:42px;background:#333;border-top:1px solid #484848"></div>
<div class="a" style="left:140px;top:637px;width:993px;height:3px;background:#3a3a3a"></div>
<div class="a" style="left:140px;top:640px;width:993px;height:7px;background:#262626"></div>
<div class="a" style="left:662px;top:642px;width:2px;height:2px;background:#a4a4a4"></div>
<div class="a" style="left:667px;top:642px;width:2px;height:2px;background:#a4a4a4"></div>
<div class="a" style="left:672px;top:642px;width:2px;height:2px;background:#a4a4a4"></div>
<div class="grp" style="left:143px;top:606px;width:125px;height:25.5px;border-radius:4px;"><div class="dv" style="left:30.5px"></div><div class="dv" style="left:61.5px"></div><div class="dv" style="left:92.5px"></div></div>
<div class="a" style="left:206px;top:608px;width:30px;height:23px;background:linear-gradient(#2f2f2f,#3a3a3a)"></div>
<svg class="a" style="left:144px;top:607px" width="31" height="25" viewBox="0 0 31 25"><path d="M10.7,4.6 L10.7,20.1 L22.1,15.8 Z" fill="#b8b8b8"/></svg>
<svg class="a" style="left:175px;top:607px" width="31" height="25" viewBox="0 0 31 25"><g stroke="#a8a8a8" stroke-width="2.2" fill="#a8a8a8"><path d="M15.5,5.5 V19.5 M8.5,12.5 H22.5" fill="none"/><path d="M15.5,2 L19,6.6 H12 Z M15.5,23 L19,18.4 H12 Z M5,12.5 L9.6,9 V16 Z M26,12.5 L21.4,9 V16 Z" stroke="none"/></g></svg>
<svg class="a" style="left:206px;top:607px" width="31" height="25" viewBox="0 0 31 25"><g fill="none" stroke="#8fc4f0" stroke-width="1.8"><path d="M9.5,12 A6.3,6.3 0 0 1 21,9"/><path d="M21.5,13 A6.3,6.3 0 0 1 10,16"/></g><path d="M5.5,12.5 L13,12.5 L9,16.5 Z M25.5,12.5 L18,12.5 L22,8.5 Z" fill="#8fc4f0"/><circle cx="15.5" cy="12.5" r="1.2" fill="#8fc4f0"/></svg>
<svg class="a" style="left:237px;top:607px" width="31" height="25" viewBox="0 0 31 25"><circle cx="16.2" cy="12.6" r="6.4" fill="none" stroke="#a8a8a8" stroke-width="3.4"/><circle cx="16.2" cy="12.6" r="1.9" fill="#b8b8b8"/><rect x="4.3" y="11.2" width="5.5" height="2.8" rx="1.4" fill="#a8a8a8"/></svg>
<div class="grp" style="left:535px;top:606.5px;width:101px;height:25px;border-radius:4px;border-radius:4px 0 0 4px"><div class="dv" style="left:30px"></div><div class="dv" style="left:62.5px"></div></div>
<svg class="a" style="left:535px;top:607px" width="32" height="25" viewBox="0 0 32 25"><path d="M14.5,7 V18 L5.5,12.5 Z M22.8,7 V18 L13.8,12.5 Z" fill="#b8b8b8"/></svg>
<svg class="a" style="left:567px;top:607px" width="32" height="25" viewBox="0 0 32 25"><path d="M12,6.8 H18 V9 H14.8 V16.3 H18 V18.5 H12 Z" fill="#b8b8b8"/></svg>
<svg class="a" style="left:599px;top:607px" width="32" height="25" viewBox="0 0 32 25"><path d="M8.7,7 H11.4 V18 H8.7 Z M20,7 V18 L11.4,12.5 Z" fill="#b8b8b8"/></svg>
<div class="grp" style="left:696px;top:606.5px;width:101px;height:25px;border-radius:4px;border-radius:0 4px 4px 0"><div class="dv" style="left:35px"></div><div class="dv" style="left:66.5px"></div></div>
<svg class="a" style="left:701px;top:607px" width="32" height="25" viewBox="0 0 32 25"><path d="M23.3,7 H20.6 V18 H23.3 Z M12,7 V18 L20.6,12.5 Z" fill="#b8b8b8"/></svg>
<svg class="a" style="left:733px;top:607px" width="32" height="25" viewBox="0 0 32 25"><path d="M20,6.8 H14 V9 H17.2 V16.3 H14 V18.5 H20 Z" fill="#b8b8b8"/></svg>
<svg class="a" style="left:765px;top:607px" width="32" height="25" viewBox="0 0 32 25"><path d="M9.2,7 V18 L18.2,12.5 Z M17.5,7 V18 L26.5,12.5 Z" fill="#b8b8b8"/></svg>
<div class="a" style="left:620px;top:605px;width:92px;height:28.5px;overflow:hidden"><div class="a" style="left:8.5px;top:-24.5px;width:75px;height:75px;border-radius:50%;background:#333;border:1px solid #181818"></div></div>
<div class="grp" style="left:633px;top:601px;width:66px;height:35px;border-radius:17.5px;"><div class="dv" style="left:32.5px"></div></div>
<svg class="a" style="left:633px;top:601px" width="34" height="35" viewBox="0 0 34 35"><circle cx="19" cy="17" r="5.2" fill="#c4c4c4"/></svg>
<svg class="a" style="left:667px;top:601px" width="32" height="35" viewBox="0 0 32 35"><path d="M9.5,11 V24 L20.5,17.5 Z" fill="#c4c4c4"/></svg>
<div class="grp" style="left:980px;top:606.5px;width:31px;height:25px;border-radius:4px;"></div>
<svg class="a" style="left:980px;top:607px" width="31" height="25" viewBox="0 0 31 25"><g fill="none" stroke="#b8b8b8" stroke-width="1.3"><circle cx="15.5" cy="12.5" r="7.3"/><circle cx="15.5" cy="12.5" r="3"/><path d="M15.5,5 V9.5 M15.5,15.5 V20 M8,12.5 H12.5 M18.5,12.5 H23"/></g></svg>
<div class="grp" style="left:1017px;top:606.5px;width:130px;height:25px;border-radius:4px;"></div>
<div class="a" style="left:1030px;top:607px;width:100px;height:25px;line-height:25px;text-align:center;font-size:11px;color:#c8c8c8">camera1</div>

<!-- ===== TIMELINE ===== -->
<div class="a" style="left:140px;top:647px;width:993px;height:1px;background:#7e9a92"></div>
<div class="a" style="left:140px;top:647px;width:1px;height:168px;background:#7e9a92"></div>
<div class="a" style="left:141px;top:648px;width:992px;height:32px;background:#272727"></div>
<div class="a" style="left:141px;top:648px;width:3px;height:167px;background:#333"></div>
<div class="tab" style="left:147px;top:653px;width:132px;height:27px;line-height:30px;background:linear-gradient(#424242,#3a3a3a);border:1px solid #4a4a4a;border-bottom:none;border-radius:5px 5px 0 0;padding-right:5px">Timeline</div>
<div class="a" style="left:143px;top:680px;width:990px;height:40px;background:#363636"></div>
<div class="a" style="left:143px;top:719px;width:990px;height:16px;background:#363636;border-top:1px solid #1c1c1c;border-left:1px solid #1c1c1c;border-bottom:1px solid #262b25"></div>
<div class="grp" style="left:143.5px;top:686px;width:95.5px;height:25.5px;border-radius:4px;"><div class="dv" style="left:30px"></div><div class="dv" style="left:62.5px"></div></div>
<div class="a" style="left:176px;top:687.5px;width:30px;height:23px;background:linear-gradient(#2f2f2f,#3a3a3a)"></div>
<svg class="a" style="left:144px;top:686.5px" width="31" height="25" viewBox="0 0 31 25"><rect x="8" y="5" width="17" height="15" fill="none" stroke="#f0b429" stroke-width="1.6"/><path d="M8,9 H25 M8,16 H25" stroke="#f0b429" stroke-width="1.4"/><g fill="#f0b429"><rect x="10" y="6.3" width="2" height="1.8"/><rect x="13.5" y="6.3" width="2" height="1.8"/><rect x="17" y="6.3" width="2" height="1.8"/><rect x="20.5" y="6.3" width="2" height="1.8"/><rect x="10" y="17" width="2" height="1.8"/><rect x="13.5" y="17" width="2" height="1.8"/><rect x="17" y="17" width="2" height="1.8"/><rect x="20.5" y="17" width="2" height="1.8"/></g></svg>
<svg class="a" style="left:176px;top:686.5px" width="31" height="25" viewBox="0 0 31 25"><path d="M5,12.5 L10,7 V18 Z M27,12.5 L22,7 V18 Z" fill="#5f9fd8"/><rect x="10" y="6" width="12" height="13" fill="#cfe6fb"/><rect x="10" y="6" width="2.5" height="13" fill="#7db8ee"/><rect x="19.5" y="6" width="2.5" height="13" fill="#7db8ee"/></svg>
<svg class="a" style="left:208px;top:686.5px" width="31" height="25" viewBox="0 0 31 25"><path d="M6,13 H11 L13,7.5 L16.5,18.5 L19,13 H24" fill="none" stroke="#c8c8c8" stroke-width="1.6" stroke-linejoin="round"/></svg>
<div class="grp" style="left:272px;top:686.5px;width:38px;height:25px;border-radius:4px;"></div>
<svg class="a" style="left:272px;top:686.5px" width="38" height="25" viewBox="0 0 38 25"><path d="M12.5,4.5 Q12.5,3.5 13.5,3.5 H19.5 Q20.5,3.5 20.5,4.5 V9.5 L16.5,13 L12.5,9.5 Z" fill="#b8b8b8"/><path d="M9,12.5 V20 M5.2,16.2 H12.8" stroke="#b8b8b8" stroke-width="1.7"/><rect x="26" y="1" width="11" height="23" fill="#000" opacity="0.12"/><path d="M28.5,11.5 H34 L31.2,14.5 Z" fill="#6e6e6e"/></svg>
<div class="grp" style="left:316px;top:686.5px;width:32px;height:25px;border-radius:4px;"></div>
<svg class="a" style="left:316px;top:686.5px" width="32" height="25" viewBox="0 0 32 25"><path d="M7.5,4.5 H16.5 V7 L12.9,12.5 L16.5,18.5 V21.5 H7.5 V18.5 L11.1,12.5 L7.5,7 Z" fill="#b8b8b8"/><path d="M14.5,12.5 L20.5,6.5 H25 V19.5 H20.5 Z" fill="#b8b8b8" opacity="0.85"/></svg>
<div class="grp" style="left:354px;top:686.5px;width:99px;height:25px;border-radius:4px;"></div>
<div class="a" style="left:441px;top:687.5px;width:11px;height:23px;background:#000;opacity:0.12"></div>
<div class="a" style="left:354px;top:686.5px;width:97px;height:25px;line-height:25px;text-align:center;font-size:11px;color:#c8c8c8">Transform</div>
<svg class="a" style="left:441px;top:686.5px" width="12" height="25" viewBox="0 0 12 25"><path d="M3,11.5 H9 L6,14.5 Z" fill="#b0b0b0"/></svg>
<div class="grp" style="left:987.5px;top:686.5px;width:31px;height:25px;border-radius:4px;background:linear-gradient(#292929,#373737);box-shadow:inset 0 1px 2px #1a1a1a,0 0 1.5px #151515"></div>
<svg class="a" style="left:987px;top:686.5px" width="32" height="25" viewBox="0 0 32 25"><path d="M10.1,17.3 V11.2 A6.6,6.6 0 0 1 23.3,11.2 V17.3" fill="none" stroke="#a6cdf3" stroke-width="2.4"/><rect x="8.7" y="18.7" width="2.9" height="2.5" fill="#a6cdf3"/><rect x="21.8" y="18.7" width="2.9" height="2.5" fill="#a6cdf3"/></svg>
<div class="grp" style="left:1025.5px;top:686.5px;width:31px;height:25px;border-radius:4px;background:linear-gradient(#292929,#373737);box-shadow:inset 0 1px 2px #1a1a1a,0 0 1.5px #151515"></div>
<svg class="a" style="left:1025px;top:686.5px" width="32" height="25" viewBox="0 0 32 25"><path d="M8.4,17.3 V12.2 A7.8,7.8 0 0 1 24,12.2 V17.3" fill="none" stroke="#a6cdf3" stroke-width="2.4"/><rect x="7" y="18.7" width="2.9" height="2.5" fill="#a6cdf3"/><rect x="22.5" y="18.7" width="2.9" height="2.5" fill="#a6cdf3"/><path d="M12.2,10.3 H20.3 V17.3 L16.2,21.4 L12.2,17.3 Z" fill="#dcecfc"/></svg>
<div class="grp" style="left:1075.5px;top:686.5px;width:31px;height:25px;border-radius:4px;"></div>
<svg class="a" style="left:1075px;top:686.5px" width="32" height="25" viewBox="0 0 32 25"><path d="M7,11.5 H14 V7.5 L23.2,13 L14,18.5 V14.5 H7 Z" fill="#b8b8b8"/><rect x="23.3" y="7.5" width="2.9" height="11" fill="#b8b8b8"/></svg>
<div class="grp" style="left:1113.5px;top:686.5px;width:40px;height:25px;border-radius:4px;"></div>
<svg class="a" style="left:1113px;top:686.5px" width="20" height="25" viewBox="0 0 20 25"><path d="M10.5,9.5 H13.5 L19.5,4.5 V20.5 L13.5,15.5 H10.5 Z" fill="#b8b8b8"/></svg>
<div class="a" style="left:143px;top:735px;width:990px;height:80px;background:#51724c"></div>
<div class="a" style="left:143px;top:735px;width:990px;height:18px;background:#3f5e3a"></div>
<div class="a" style="left:143px;top:753px;width:990px;height:1px;background:#2a4726"></div>
<div class="a" style="left:143px;top:754px;width:30px;height:61px;background:#2e4c2a"></div>
<svg class="a" style="left:0;top:0" width="1133" height="815" viewBox="0 0 1133 815"><rect x="156.0" y="750.5" width="1" height="2.5" fill="#2a4726"/><rect x="173.0" y="747.5" width="1" height="5.5" fill="#2a4726"/><rect x="189.0" y="750.5" width="1" height="2.5" fill="#2a4726"/><rect x="206.0" y="750.5" width="1" height="2.5" fill="#2a4726"/><rect x="222.0" y="750.5" width="1" height="2.5" fill="#2a4726"/><rect x="239.0" y="750.5" width="1" height="2.5" fill="#2a4726"/><rect x="255.0" y="748.7" width="1" height="4.3" fill="#2a4726"/><rect x="272.0" y="750.5" width="1" height="2.5" fill="#2a4726"/><rect x="288.0" y="750.5" width="1" height="2.5" fill="#2a4726"/><rect x="305.0" y="750.5" width="1" height="2.5" fill="#2a4726"/><rect x="322.0" y="750.5" width="1" height="2.5" fill="#2a4726"/><rect x="338.0" y="747.5" width="1" height="5.5" fill="#2a4726"/><text x="339.4" y="746" font-size="11" fill="#2c4a28" text-anchor="middle" font-family="Liberation Sans, sans-serif">10</text><rect x="355.0" y="750.5" width="1" height="2.5" fill="#2a4726"/><rect x="371.0" y="750.5" width="1" height="2.5" fill="#2a4726"/><rect x="388.0" y="750.5" width="1" height="2.5" fill="#2a4726"/><rect x="404.0" y="750.5" width="1" height="2.5" fill="#2a4726"/><rect x="421.0" y="748.7" width="1" height="4.3" fill="#2a4726"/><rect x="437.0" y="750.5" width="1" height="2.5" fill="#2a4726"/><rect x="454.0" y="750.5" width="1" height="2.5" fill="#2a4726"/><rect x="470.0" y="750.5" width="1" height="2.5" fill="#2a4726"/><rect x="487.0" y="750.5" width="1" height="2.5" fill="#2a4726"/><rect x="503.0" y="747.5" width="1" height="5.5" fill="#2a4726"/><text x="504.7" y="746" font-size="11" fill="#2c4a28" text-anchor="middle" font-family="Liberation Sans, sans-serif">20</text><rect x="520.0" y="750.5" width="1" height="2.5" fill="#2a4726"/><rect x="536.0" y="750.5" width="1" height="2.5" fill="#2a4726"/><rect x="553.0" y="750.5" width="1" height="2.5" fill="#2a4726"/><rect x="569.0" y="750.5" width="1" height="2.5" fill="#2a4726"/><rect x="586.0" y="748.7" width="1" height="4.3" fill="#2a4726"/><rect x="603.0" y="750.5" width="1" height="2.5" fill="#2a4726"/><rect x="619.0" y="750.5" width="1" height="2.5" fill="#2a4726"/><rect x="636.0" y="750.5" width="1" height="2.5" fill="#2a4726"/><rect x="652.0" y="750.5" width="1" height="2.5" fill="#2a4726"/><rect x="669.0" y="747.5" width="1" height="5.5" fill="#2a4726"/><text x="670.0" y="746" font-size="11" fill="#2c4a28" text-anchor="middle" font-family="Liberation Sans, sans-serif">30</text><rect x="685.0" y="750.5" width="1" height="2.5" fill="#2a4726"/><rect x="702.0" y="750.5" width="1" height="2.5" fill="#2a4726"/><rect x="718.0" y="750.5" width="1" height="2.5" fill="#2a4726"/><rect x="735.0" y="750.5" width="1" height="2.5" fill="#2a4726"/><rect x="751.0" y="748.7" width="1" height="4.3" fill="#2a4726"/><rect x="768.0" y="750.5" width="1" height="2.5" fill="#2a4726"/><rect x="784.0" y="750.5" width="1" height="2.5" fill="#2a4726"/><rect x="801.0" y="750.5" width="1" height="2.5" fill="#2a4726"/><rect x="817.0" y="750.5" width="1" height="2.5" fill="#2a4726"/><rect x="834.0" y="747.5" width="1" height="5.5" fill="#2a4726"/><text x="835.2" y="746" font-size="11" fill="#2c4a28" text-anchor="middle" font-family="Liberation Sans, sans-serif">40</text><rect x="850.0" y="750.5" width="1" height="2.5" fill="#2a4726"/><rect x="867.0" y="750.5" width="1" height="2.5" fill="#2a4726"/><rect x="884.0" y="750.5" width="1" height="2.5" fill="#2a4726"/><rect x="900.0" y="750.5" width="1" height="2.5" fill="#2a4726"/><rect x="917.0" y="748.7" width="1" height="4.3" fill="#2a4726"/><rect x="933.0" y="750.5" width="1" height="2.5" fill="#2a4726"/><rect x="950.0" y="750.5" width="1" height="2.5" fill="#2a4726"/><rect x="966.0" y="750.5" width="1" height="2.5" fill="#2a4726"/><rect x="983.0" y="750.5" width="1" height="2.5" fill="#2a4726"/><rect x="999.0" y="747.5" width="1" height="5.5" fill="#2a4726"/><text x="1000.5" y="746" font-size="11" fill="#2c4a28" text-anchor="middle" font-family="Liberation Sans, sans-serif">50</text><rect x="1016.0" y="750.5" width="1" height="2.5" fill="#2a4726"/><rect x="1032.0" y="750.5" width="1" height="2.5" fill="#2a4726"/><rect x="1049.0" y="750.5" width="1" height="2.5" fill="#2a4726"/><rect x="1065.0" y="750.5" width="1" height="2.5" fill="#2a4726"/><rect x="1082.0" y="748.7" width="1" height="4.3" fill="#2a4726"/><rect x="1098.0" y="750.5" width="1" height="2.5" fill="#2a4726"/><rect x="1115.0" y="750.5" width="1" height="2.5" fill="#2a4726"/><rect x="1131.0" y="750.5" width="1" height="2.5" fill="#2a4726"/><path d="M143,735.4 L152.5,744.7 L143,754.0 Z" fill="#23401f" stroke="#2f6a2a" stroke-width="0.8"/><path d="M143,754.0 L152.5,764.5 L143,775.0 Z" fill="#23401f" stroke="#2f6a2a" stroke-width="0.8"/><path d="M143,775.0 L152.5,785.5 L143,796.0 Z" fill="#23401f" stroke="#2f6a2a" stroke-width="0.8"/><path d="M143,796.0 L152.5,806.5 L143,817.0 Z" fill="#23401f" stroke="#2f6a2a" stroke-width="0.8"/><rect x="173" y="748" width="1" height="70" fill="#9bb1c4"/><path d="M168.5,735.5 H170.5 L173.5,739.5 L176.5,735.5 H178.5 V745.5 L173.5,750 L168.5,745.5 Z" fill="#6c88a0" stroke="#a9bdd0" stroke-width="1"/></svg>
</div></body></html>
